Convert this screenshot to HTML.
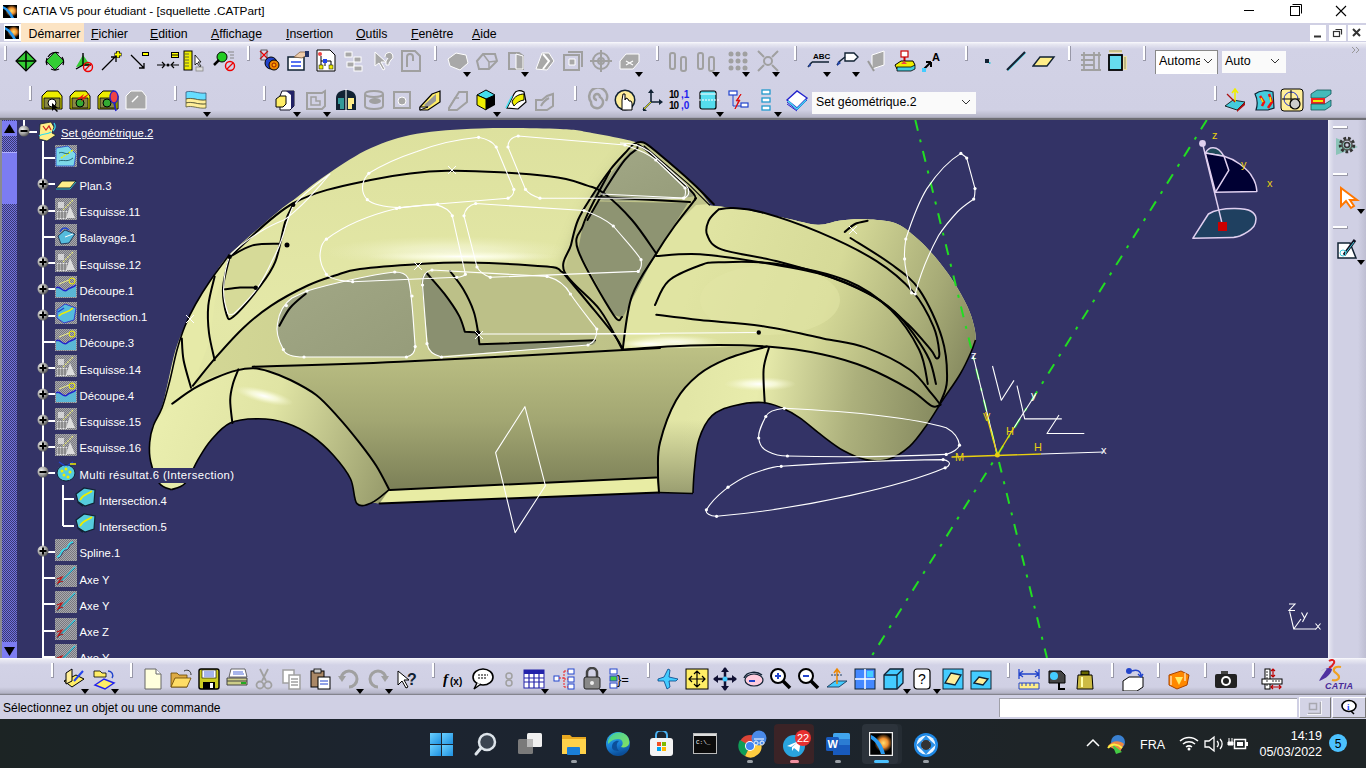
<!DOCTYPE html>
<html><head><meta charset="utf-8"><style>
*{margin:0;padding:0;box-sizing:border-box}
html,body{width:1366px;height:768px;overflow:hidden;background:#333366;font-family:"Liberation Sans",sans-serif;position:relative}
.abs{position:absolute}
.t{position:absolute;white-space:nowrap;line-height:1}
#title{left:0;top:0;width:1366px;height:23px;background:#fff}
#menu{left:0;top:23px;width:1366px;height:19px;background:#d0d0e4}
#tb{left:0;top:42px;width:1366px;height:76px;background:linear-gradient(#fafafd 0px,#e8e8f2 2px,#d2d2e6 7px,#d0d0e4 68px,#b4b4c6 75px,#9a9aa8 76px)}
#tbline{left:0;top:118px;width:1366px;height:2px;background:#6e6e74}
#vp{left:0;top:120px;width:1328px;height:538px;background:#333366;overflow:hidden}
#rtb{left:1328px;top:120px;width:38px;height:538px;background:linear-gradient(90deg,#f4f4fa 0,#e0e0ee 2px,#d0d0e4 6px,#d0d0e4 30px,#bebed2 38px)}
#btb{left:0;top:658px;width:1366px;height:37px;background:linear-gradient(#fafafd 0px,#e8e8f2 2px,#d2d2e6 7px,#d0d0e4 29px,#b4b4c6 35px,#9a9aa8 36px,#6e6e74 37px)}
#status{left:0;top:695px;width:1366px;height:24px;background:#d0d0e4}
#task{left:0;top:719px;width:1366px;height:49px;background:linear-gradient(90deg,#1c2424 0%,#1c2430 30%,#1c242e 55%,#1e2427 75%,#1e2426 100%)}
.hd{width:3px;background:#fff;border-right:1px solid #a0a0b0;border-bottom:1px solid #a0a0b0}
.menu-t{font-size:12.3px;color:#000;top:27.5px}
.tree-t{font-size:11.3px;color:#fff;background:#333366;padding:2px 1px 2px 0px}

.ic{position:absolute;width:24px;height:24px}
</style></head><body>
<div id="title" class="abs"></div>
<svg class="abs" style="left:3px;top:5px" width="14" height="13"><defs><radialGradient id="burst" cx="0.62" cy="0.45" r="0.45"><stop offset="0" stop-color="#ffe070"/><stop offset="0.5" stop-color="#f09030"/><stop offset="1" stop-color="#f09030" stop-opacity="0"/></radialGradient></defs><rect width="14" height="13" fill="#000"/><rect width="14" height="13" fill="url(#burst)"/><path d="M0,1 C5,3 9,8 11,13 L8,13 C6,9 3,5 0,3.5Z" fill="#2a9af0"/></svg>
<div class="t" style="left:23px;top:5.5px;font-size:11.8px;color:#000">CATIA V5 pour étudiant - [squellette .CATPart]</div>
<svg class="abs" style="left:1240px;top:0" width="126" height="23"><path d="M4,10.5H14" stroke="#000" stroke-width="1"/><rect x="50.5" y="6.5" width="9" height="9" fill="none" stroke="#000"/><path d="M52.5,4.5H61.5V13.5" fill="none" stroke="#000"/><path d="M96,6L106,16M106,6L96,16" stroke="#000" stroke-width="1.1"/></svg>
<div id="menu" class="abs"></div>
<div class="abs" style="left:21px;top:23px;width:63px;height:19px;background:#fce4c4"></div>
<div class="abs" style="left:4px;top:24px;width:17px;height:17px;background:#fff"></div>
<svg class="abs" style="left:5px;top:26px" width="14" height="13"><rect width="14" height="13" fill="#000"/><rect width="14" height="13" fill="url(#burst)"/><path d="M0,1 C5,3 9,8 11,13 L8,13 C6,9 3,5 0,3.5Z" fill="#2a9af0"/></svg>
<div class="t menu-t" style="left:28.5px">Démarrer</div>
<div class="t menu-t" style="left:91px"><u>F</u>ichier</div>
<div class="t menu-t" style="left:150px"><u>E</u>dition</div>
<div class="t menu-t" style="left:211px"><u>A</u>ffichage</div>
<div class="t menu-t" style="left:286px"><u>I</u>nsertion</div>
<div class="t menu-t" style="left:356px"><u>O</u>utils</div>
<div class="t menu-t" style="left:411px"><u>F</u>enêtre</div>
<div class="t menu-t" style="left:472px"><u>A</u>ide</div>
<div class="abs" style="left:1310px;top:25px;width:16px;height:16px;background:#fff"></div>
<div class="abs" style="left:1329px;top:25px;width:17px;height:16px;background:#fff"></div>
<div class="abs" style="left:1348px;top:25px;width:18px;height:16px;background:#fff"></div>
<svg class="abs" style="left:1310px;top:25px" width="56" height="16"><path d="M4,11.5H11" stroke="#333" stroke-width="2"/><rect x="23.5" y="6.5" width="6" height="5" fill="none" stroke="#333" stroke-width="1.2"/><path d="M25.5,4.5H31.5V9.5" fill="none" stroke="#333" stroke-width="1.2"/><path d="M43,4L50,11M50,4L43,11" stroke="#333" stroke-width="2"/></svg>
<div id="tb" class="abs"></div>
<div id="tbline" class="abs"></div>
<div class="abs" style="left:4px;top:46px;width:3px;height:15px;background:#fff;border-right:1px solid #9898a8;border-bottom:1px solid #9898a8"></div>
<div class="abs" style="left:247px;top:46px;width:3px;height:15px;background:#fff;border-right:1px solid #9898a8;border-bottom:1px solid #9898a8"></div>
<div class="abs" style="left:434px;top:46px;width:3px;height:15px;background:#fff;border-right:1px solid #9898a8;border-bottom:1px solid #9898a8"></div>
<div class="abs" style="left:656px;top:46px;width:3px;height:15px;background:#fff;border-right:1px solid #9898a8;border-bottom:1px solid #9898a8"></div>
<div class="abs" style="left:794px;top:46px;width:3px;height:15px;background:#fff;border-right:1px solid #9898a8;border-bottom:1px solid #9898a8"></div>
<div class="abs" style="left:965px;top:46px;width:3px;height:15px;background:#fff;border-right:1px solid #9898a8;border-bottom:1px solid #9898a8"></div>
<div class="abs" style="left:1068px;top:46px;width:3px;height:15px;background:#fff;border-right:1px solid #9898a8;border-bottom:1px solid #9898a8"></div>
<div class="abs" style="left:1143px;top:46px;width:3px;height:15px;background:#fff;border-right:1px solid #9898a8;border-bottom:1px solid #9898a8"></div>
<svg class="abs" style="left:14px;top:49px" width="24" height="24" viewBox="0 0 24 24"><path d="M12,2 L22,12 L12,22 L2,12Z" fill="#3c3" stroke="#000" stroke-width="1.2"/><path d="M12,3V21M3,12H21" stroke="#000" stroke-width="1.5"/></svg>
<svg class="abs" style="left:43px;top:49px" width="24" height="24" viewBox="0 0 24 24"><path d="M12,3 L21,12 L12,21 L3,12Z" fill="#3c3" stroke="#222" stroke-width="1"/><path d="M5,8 A9,9 0 0 1 16,4M19,8A9,9 0 0 1 20,16M16,20A9,9 0 0 1 8,20M4,16A9,9 0 0 1 4,9" stroke="#000" stroke-width="1.3" fill="none"/></svg>
<svg class="abs" style="left:72px;top:49px" width="24" height="24" viewBox="0 0 24 24"><path d="M4,18 L11,6 L18,16Z" fill="#3c3"/><path d="M11,4V16H19M11,16L4,20" stroke="#000" stroke-width="1.4" fill="none"/><circle cx="16" cy="18" r="4.5" fill="none" stroke="#e00" stroke-width="1.4"/><path d="M13,21L19,15" stroke="#e00" stroke-width="1.3"/></svg>
<svg class="abs" style="left:99px;top:49px" width="24" height="24" viewBox="0 0 24 24"><path d="M3,21 L17,7M12,8H17V13" stroke="#000" stroke-width="1.3" fill="none"/><path d="M19,2V9M15.5,5.5H22.5" stroke="#000" stroke-width="3.5"/><path d="M19,2.5V8.5M16,5.5H22" stroke="#ff0" stroke-width="1.8"/></svg>
<svg class="abs" style="left:127px;top:49px" width="24" height="24" viewBox="0 0 24 24"><path d="M4,6 L17,19M12,19H17V14" stroke="#000" stroke-width="1.3" fill="none"/><rect x="15" y="3" width="7" height="4" fill="#000"/><rect x="16" y="4" width="5" height="2" fill="#ff0"/></svg>
<svg class="abs" style="left:156px;top:49px" width="24" height="24" viewBox="0 0 24 24"><path d="M1,16H8M6,13L9,16L6,19M23,16H16M18,13L15,16L18,19" stroke="#000" stroke-width="1.2" fill="none"/><circle cx="12" cy="16" r="1.6" fill="#000"/><rect x="15" y="3" width="8" height="6" fill="#000"/><rect x="16" y="4" width="6" height="1.5" fill="#ff0"/><rect x="16" y="6.5" width="6" height="1.5" fill="#ff0"/></svg>
<svg class="abs" style="left:182px;top:49px" width="24" height="24" viewBox="0 0 24 24"><rect x="2" y="2" width="8" height="19" fill="#ee0" stroke="#000" stroke-width="1"/><path d="M3,5H7M3,8H7M3,11H7M3,14H7M3,17H7" stroke="#444" stroke-width="0.8"/><path d="M13,6 L13,16 L15,14 L18,18 L19,17 L16,13 L19,13Z" fill="#fff" stroke="#000" stroke-width="0.8"/><rect x="14" y="18" width="7" height="4" fill="#ddd" stroke="#888" stroke-width="0.8"/></svg>
<svg class="abs" style="left:213px;top:49px" width="24" height="24" viewBox="0 0 24 24"><circle cx="9" cy="8" r="5" fill="#2c2" stroke="#000" stroke-width="1"/><path d="M6,11L1,16" stroke="#000" stroke-width="2.5"/><path d="M15,3H21M17,6H21M17,9H21" stroke="#888" stroke-width="1"/><circle cx="17" cy="17" r="4.5" fill="none" stroke="#e00" stroke-width="1.4"/><path d="M14,20L20,14" stroke="#e00" stroke-width="1.3"/></svg>
<svg class="abs" style="left:258px;top:49px" width="24" height="24" viewBox="0 0 24 24"><path d="M2,2L10,10M10,2L2,10" stroke="#e00" stroke-width="1.2"/><rect x="3" y="1" width="6" height="10" fill="none" stroke="#444" stroke-width="0.8"/><circle cx="13" cy="14" r="6" fill="#24c" stroke="#000" stroke-width="1"/><circle cx="16" cy="16" r="5" fill="#e80" stroke="#000" stroke-width="1"/><circle cx="16" cy="16" r="2" fill="#fa0" stroke="#800" stroke-width="0.8"/></svg>
<svg class="abs" style="left:286px;top:49px" width="24" height="24" viewBox="0 0 24 24"><rect x="2" y="8" width="16" height="13" fill="#fff" stroke="#123" stroke-width="1.5"/><path d="M5,13H15M5,17H15" stroke="#24e" stroke-width="1.5"/><path d="M8,8 L14,3 L19,3 L21,6 L16,9Z" fill="#eca" stroke="#864" stroke-width="0.8"/><rect x="19" y="2" width="4" height="6" fill="#236"/></svg>
<svg class="abs" style="left:314px;top:49px" width="24" height="24" viewBox="0 0 24 24"><path d="M3,1H16L21,6V22H3Z" fill="#fff" stroke="#000" stroke-width="1"/><path d="M7,7V12H17V16M11,12V17M7,12V17" stroke="#000" stroke-width="1" fill="none"/><rect x="5" y="16" width="4" height="4" fill="#ee0" stroke="#000" stroke-width="0.5"/><rect x="15" y="16" width="4" height="4" fill="#ee0" stroke="#000" stroke-width="0.5"/><rect x="9" y="10" width="4" height="4" fill="#24e"/><circle cx="6" cy="5" r="2" fill="#e44"/></svg>
<svg class="abs" style="left:342px;top:49px" width="24" height="24" viewBox="0 0 24 24"><g fill="#a8a8a8" stroke="#fff" stroke-width="1"><rect x="3" y="3" width="7" height="5"/><rect x="12" y="8" width="7" height="5"/><rect x="5" y="13" width="7" height="5"/><rect x="12" y="17" width="8" height="5"/></g></svg>
<svg class="abs" style="left:371px;top:49px" width="24" height="24" viewBox="0 0 24 24"><g fill="#a8a8a8" stroke="#fff" stroke-width="1"><path d="M4,3L4,17L8,14L12,21L14,20L10,13L15,13Z"/><path d="M14,8A4,4 0 1 1 20,11L18,14V16H15V12L17,9" /></g></svg>
<svg class="abs" style="left:399px;top:49px" width="24" height="24" viewBox="0 0 24 24"><g fill="#a8a8a8" stroke="#fff" stroke-width="1"><path d="M3,2H16L21,7V22H3Z" fill="none" stroke="#a0a0a0" stroke-width="2"/><path d="M8,18V8A3,3 0 0 1 14,8V12" fill="none" stroke="#a0a0a0" stroke-width="2"/></g></svg>
<svg class="abs" style="left:446px;top:49px" width="24" height="24" viewBox="0 0 24 24"><g fill="#a8a8a8" stroke="#fff" stroke-width="1"><path d="M2,10L10,4L20,6L22,14L14,21L4,17Z"/></g></svg>
<svg class="abs" style="left:475px;top:49px" width="24" height="24" viewBox="0 0 24 24"><g fill="#a8a8a8" stroke="#fff" stroke-width="1"><path d="M2,12L8,5H20L22,12L14,20H4Z" fill="none" stroke="#a0a0a0" stroke-width="2"/><path d="M8,5L14,13L22,12M14,13L14,20" fill="none" stroke="#a0a0a0" stroke-width="1.5"/></g></svg>
<svg class="abs" style="left:504px;top:49px" width="24" height="24" viewBox="0 0 24 24"><g fill="#a8a8a8" stroke="#fff" stroke-width="1"><path d="M5,4H15L19,7V20H5Z" fill="none" stroke="#a0a0a0" stroke-width="2"/><path d="M12,5V20L19,20V7Z"/></g></svg>
<svg class="abs" style="left:533px;top:49px" width="24" height="24" viewBox="0 0 24 24"><g fill="#a8a8a8" stroke="#fff" stroke-width="1"><path d="M3,20L9,4L16,4L21,12L14,21Z"/><path d="M10,5L16,12L10,20" fill="none" stroke="#fff" stroke-width="2"/></g></svg>
<svg class="abs" style="left:561px;top:49px" width="24" height="24" viewBox="0 0 24 24"><g fill="#a8a8a8" stroke="#fff" stroke-width="1"><path d="M3,6H18V21H3Z" fill="none" stroke="#a0a0a0" stroke-width="2"/><path d="M7,3H21V18" fill="none" stroke="#a0a0a0" stroke-width="2"/><path d="M8,10H14V16H8Z"/></g></svg>
<svg class="abs" style="left:589px;top:49px" width="24" height="24" viewBox="0 0 24 24"><g fill="none" stroke="#a0a0a0" stroke-width="2"><circle cx="12" cy="12" r="8"/><circle cx="12" cy="12" r="3"/><path d="M12,1V23M1,12H23"/></g></svg>
<svg class="abs" style="left:618px;top:49px" width="24" height="24" viewBox="0 0 24 24"><g fill="#a8a8a8" stroke="#fff" stroke-width="1"><path d="M2,12L8,5H21V13L15,20H2Z"/><path d="M8,12L15,16M15,12L8,16" stroke="#fff" stroke-width="1.2"/></g></svg>
<svg class="abs" style="left:667px;top:49px" width="24" height="24" viewBox="0 0 24 24"><g fill="none" stroke="#a0a0a0" stroke-width="2"><rect x="3" y="4" width="5" height="16" rx="2"/><rect x="14" y="8" width="5" height="14" rx="2"/></g></svg>
<svg class="abs" style="left:695px;top:49px" width="24" height="24" viewBox="0 0 24 24"><g fill="none" stroke="#a0a0a0" stroke-width="2"><rect x="3" y="4" width="5" height="16" rx="2"/><rect x="14" y="8" width="5" height="14" rx="2"/></g></svg>
<svg class="abs" style="left:726px;top:49px" width="24" height="24" viewBox="0 0 24 24"><g fill="#a0a0a0"><circle cx="5" cy="5" r="2.5"/><circle cx="12" cy="5" r="2.5"/><circle cx="19" cy="5" r="2.5"/><circle cx="5" cy="12" r="2.5"/><circle cx="12" cy="12" r="2.5"/><circle cx="19" cy="12" r="2.5"/><circle cx="5" cy="19" r="2.5"/><circle cx="12" cy="19" r="2.5"/><circle cx="19" cy="19" r="2.5"/></g></svg>
<svg class="abs" style="left:756px;top:49px" width="24" height="24" viewBox="0 0 24 24"><g fill="none" stroke="#a0a0a0" stroke-width="2"><circle cx="12" cy="12" r="4"/><path d="M2,2L8,8M22,2L16,8M2,22L8,16M22,22L16,16"/></g></svg>
<svg class="abs" style="left:807px;top:49px" width="24" height="24" viewBox="0 0 24 24"><text x="6" y="10" font-size="8" font-family="Liberation Sans" fill="#000" font-weight="bold">ABC</text><path d="M5,13H22M5,13L1,18" stroke="#123" stroke-width="1.5" fill="none"/><path d="M1,18L3,14L4,17Z" fill="#24a"/></svg>
<svg class="abs" style="left:836px;top:49px" width="24" height="24" viewBox="0 0 24 24"><path d="M9,4H18L22,8L18,12H9Z" fill="#fff" stroke="#123" stroke-width="1.4"/><path d="M9,8L4,12L1,16" stroke="#123" stroke-width="1.5" fill="none"/><path d="M1,17L2,12L5,14Z" fill="#24a"/></svg>
<svg class="abs" style="left:864px;top:49px" width="24" height="24" viewBox="0 0 24 24"><g fill="#a8a8a8" stroke="#fff" stroke-width="1"><path d="M8,6L20,2V16L8,20Z"/><path d="M4,12L10,22" stroke="#999" stroke-width="2"/></g></svg>
<svg class="abs" style="left:893px;top:49px" width="24" height="24" viewBox="0 0 24 24"><rect x="8" y="2" width="7" height="6" fill="#fff" stroke="#c00" stroke-width="1.2"/><path d="M11.5,8V12" stroke="#c00" stroke-width="2"/><path d="M2,16L8,12H20L22,16L18,20H4Z" fill="#ee0" stroke="#000" stroke-width="1"/><path d="M4,18H18L22,16V20L18,22H4Z" fill="#4cd" stroke="#000" stroke-width="0.8"/><path d="M8,15L11,12L14,15" fill="#e44"/></svg>
<svg class="abs" style="left:921px;top:49px" width="24" height="24" viewBox="0 0 24 24"><path d="M2,21L10,13M10,13V18M10,13H5" stroke="#000" stroke-width="2" fill="none"/><rect x="1" y="19" width="4" height="4" fill="#4cf"/><text x="11" y="12" font-size="11" font-family="Liberation Sans" font-weight="bold" fill="#000">A</text></svg>
<svg class="abs" style="left:976px;top:49px" width="24" height="24" viewBox="0 0 24 24"><rect x="9" y="10" width="4" height="4" fill="#123"/><rect x="13" y="13" width="1.5" height="2" fill="#4cd"/></svg>
<svg class="abs" style="left:1004px;top:49px" width="24" height="24" viewBox="0 0 24 24"><path d="M3,21L21,3" stroke="#123" stroke-width="2.2"/><path d="M4,22L22,4" stroke="#4cd" stroke-width="0.8"/></svg>
<svg class="abs" style="left:1032px;top:49px" width="24" height="24" viewBox="0 0 24 24"><path d="M1,17L8,8H22L15,17Z" fill="#fe8" stroke="#123" stroke-width="1.4"/></svg>
<svg class="abs" style="left:1079px;top:49px" width="24" height="24" viewBox="0 0 24 24"><g fill="none" stroke="#a0a0a0" stroke-width="1.8"><path d="M2,6H22M2,11H15M2,16H15M2,21H22M5,3V21M15,3V21M20,3V21"/></g></svg>
<svg class="abs" style="left:1106px;top:49px" width="24" height="24" viewBox="0 0 24 24"><rect x="3" y="6" width="13" height="15" fill="#6de" stroke="#000" stroke-width="1.8"/><path d="M3,2H16M19,8V20" stroke="#123" stroke-width="1.2"/><rect x="3" y="1" width="13" height="3" fill="#fe8" opacity="0.6"/><rect x="17" y="7" width="4" height="14" fill="#fe8" opacity="0.6"/></svg>
<svg class="abs" style="left:463px;top:72px" width="8" height="5"><path d="M0,0H8L4,5Z" fill="#000"/></svg>
<svg class="abs" style="left:521px;top:72px" width="8" height="5"><path d="M0,0H8L4,5Z" fill="#000"/></svg>
<svg class="abs" style="left:635px;top:72px" width="8" height="5"><path d="M0,0H8L4,5Z" fill="#000"/></svg>
<svg class="abs" style="left:712px;top:72px" width="8" height="5"><path d="M0,0H8L4,5Z" fill="#000"/></svg>
<svg class="abs" style="left:742px;top:72px" width="8" height="5"><path d="M0,0H8L4,5Z" fill="#000"/></svg>
<svg class="abs" style="left:772px;top:72px" width="8" height="5"><path d="M0,0H8L4,5Z" fill="#000"/></svg>
<svg class="abs" style="left:823px;top:72px" width="8" height="5"><path d="M0,0H8L4,5Z" fill="#000"/></svg>
<svg class="abs" style="left:852px;top:72px" width="8" height="5"><path d="M0,0H8L4,5Z" fill="#000"/></svg>
<div class="abs" style="left:1155px;top:50px;width:63px;height:24px;background:#fff;border:1px solid #888;border-bottom:none"></div>
<div class="t" style="left:1159px;top:55px;font-size:12.5px;color:#000;width:43px;overflow:hidden">Automatique</div>
<div class="abs" style="left:1200px;top:51px;width:17px;height:22px;background:#fafafa"></div>
<svg class="abs" style="left:1203px;top:58px" width="10" height="7"><path d="M1,1L5,5L9,1" stroke="#333" fill="none"/></svg>
<div class="abs" style="left:1222px;top:51px;width:64px;height:22px;background:#fafafa"></div>
<div class="t" style="left:1225px;top:55px;font-size:12.5px;color:#000">Auto</div>
<svg class="abs" style="left:1270px;top:58px" width="10" height="7"><path d="M1,1L5,5L9,1" stroke="#333" fill="none"/></svg>
<svg class="abs" style="left:1351px;top:46px" width="10" height="8"><path d="M1,1L4,4L1,7M5,1L8,4L5,7" stroke="#999" fill="none"/></svg>
<div class="abs" style="left:29px;top:86px;width:3px;height:15px;background:#fff;border-right:1px solid #9898a8;border-bottom:1px solid #9898a8"></div>
<div class="abs" style="left:174px;top:86px;width:3px;height:15px;background:#fff;border-right:1px solid #9898a8;border-bottom:1px solid #9898a8"></div>
<div class="abs" style="left:263px;top:86px;width:3px;height:15px;background:#fff;border-right:1px solid #9898a8;border-bottom:1px solid #9898a8"></div>
<div class="abs" style="left:574px;top:86px;width:3px;height:15px;background:#fff;border-right:1px solid #9898a8;border-bottom:1px solid #9898a8"></div>
<div class="abs" style="left:1214px;top:86px;width:3px;height:15px;background:#fff;border-right:1px solid #9898a8;border-bottom:1px solid #9898a8"></div>
<svg class="abs" style="left:40px;top:88px" width="24" height="24" viewBox="0 0 24 24"><path d="M2,8L7,3H18L22,8V21H2Z" fill="#ee0" stroke="#000" stroke-width="1"/><path d="M4,10H20V20H4Z" fill="#884" stroke="#000" stroke-width="0.8"/><circle cx="12" cy="15" r="4" fill="#fff" stroke="#000" stroke-width="1"/><path d="M12,15L12,23L14,21L17,24L18,23L15,20L18,20Z" fill="#000"/></svg>
<svg class="abs" style="left:68px;top:88px" width="24" height="24" viewBox="0 0 24 24"><path d="M2,8L7,3H18L22,8V21H2Z" fill="#ee0" stroke="#000" stroke-width="1"/><path d="M4,10H20V20H4Z" fill="#884" stroke="#000" stroke-width="0.8"/><circle cx="12" cy="15" r="4" fill="#3a3" stroke="#000" stroke-width="1"/><path d="M8,12L16,6L14,10L22,5L13,14L15,10Z" fill="#e11"/></svg>
<svg class="abs" style="left:96px;top:88px" width="24" height="24" viewBox="0 0 24 24"><path d="M2,8L7,3H18L22,8V21H2Z" fill="#ee0" stroke="#000" stroke-width="1"/><path d="M4,10H20V20H4Z" fill="#884" stroke="#000" stroke-width="0.8"/><circle cx="11" cy="15" r="4" fill="#3a3" stroke="#000" stroke-width="1"/><ellipse cx="18" cy="9" rx="4" ry="6" fill="#e44" stroke="#22c" stroke-width="1.3"/><path d="M18,15L20,23" stroke="#22c" stroke-width="1.5"/></svg>
<svg class="abs" style="left:124px;top:88px" width="24" height="24" viewBox="0 0 24 24"><g fill="#a8a8a8" stroke="#fff" stroke-width="1"><path d="M2,8L7,3H18L22,8V21H2Z"/><path d="M8,14L14,8" stroke="#fff" stroke-width="1.5"/></g></svg>
<svg class="abs" style="left:184px;top:88px" width="24" height="24" viewBox="0 0 24 24"><path d="M2,4C8,2 14,6 22,5V12C14,13 8,9 2,11Z" fill="#6df" stroke="#357" stroke-width="0.8"/><path d="M2,11C8,9 14,13 22,12V16C14,17 8,13 2,15Z" fill="#fe9" stroke="#553" stroke-width="0.8"/><path d="M2,15C8,13 14,17 22,16V20C14,21 8,17 2,19Z" fill="#fe9" stroke="#553" stroke-width="0.8"/></svg>
<svg class="abs" style="left:274px;top:88px" width="24" height="24" viewBox="0 0 24 24"><path d="M8,3H20V18L16,22H6V8Z" fill="#fff" stroke="#112" stroke-width="1"/><path d="M12,3H20V18L17,21V7Z" fill="#226"/><path d="M2,11L6,8H12V16L9,19H2Z" fill="#fe6" stroke="#000" stroke-width="1"/></svg>
<svg class="abs" style="left:304px;top:88px" width="24" height="24" viewBox="0 0 24 24"><g fill="#a8a8a8" stroke="#fff" stroke-width="1"><path d="M3,5H18L21,3V18L18,21H3Z" fill="none" stroke="#a0a0a0" stroke-width="2"/><path d="M7,9H12V13H16V17H7Z" fill="none" stroke="#a0a0a0" stroke-width="1.5"/></g></svg>
<svg class="abs" style="left:334px;top:88px" width="24" height="24" viewBox="0 0 24 24"><path d="M2,10C2,4 8,2 12,2C16,2 22,4 22,10V22H2Z" fill="#123"/><path d="M4,10H10V21H6V16H4Z" fill="#399"/><path d="M14,10H20V16H18V21H14Z" fill="#fe8"/><path d="M12,1V23" stroke="#fff" stroke-width="1"/></svg>
<svg class="abs" style="left:362px;top:88px" width="24" height="24" viewBox="0 0 24 24"><g fill="none" stroke="#a0a0a0" stroke-width="2"><ellipse cx="12" cy="6" rx="9" ry="3"/><path d="M3,6V18A9,3 0 0 0 21,18V6"/></g><ellipse cx="13" cy="13" rx="6" ry="3" fill="#a0a0a0"/></svg>
<svg class="abs" style="left:390px;top:88px" width="24" height="24" viewBox="0 0 24 24"><g fill="#a8a8a8" stroke="#fff" stroke-width="1"><path d="M4,4H20V20H4Z" fill="none" stroke="#a0a0a0" stroke-width="2"/><circle cx="12" cy="13" r="4"/></g></svg>
<svg class="abs" style="left:418px;top:88px" width="24" height="24" viewBox="0 0 24 24"><path d="M2,19L14,6L22,3V14L10,22H2Z" fill="#fe6" stroke="#000" stroke-width="1.2"/><path d="M6,17L18,6V13L9,20Z" fill="#999"/><path d="M2,19H10L2,22Z" fill="#fff" stroke="#000" stroke-width="1"/></svg>
<svg class="abs" style="left:446px;top:88px" width="24" height="24" viewBox="0 0 24 24"><g fill="#a8a8a8" stroke="#fff" stroke-width="1"><path d="M3,20L13,4H21V14L11,22H3Z" fill="none" stroke="#a0a0a0" stroke-width="2"/><path d="M3,20L9,10H13" fill="none" stroke="#a0a0a0" stroke-width="1.5"/></g></svg>
<svg class="abs" style="left:474px;top:88px" width="24" height="24" viewBox="0 0 24 24"><path d="M3,7L12,2L21,7L12,11Z" fill="#4de" stroke="#000" stroke-width="1"/><path d="M3,7V17L12,22V11Z" fill="#ee0" stroke="#000" stroke-width="1"/><path d="M21,7V17L12,22V11Z" fill="#000"/></svg>
<svg class="abs" style="left:504px;top:88px" width="24" height="24" viewBox="0 0 24 24"><path d="M3,20L10,6C12,2 16,2 20,4L22,14L14,21Z" fill="#fff" stroke="#000" stroke-width="1.2"/><path d="M8,14C10,8 16,6 20,6V12C14,13 12,16 10,18Z" fill="#ee0" stroke="#000" stroke-width="1"/><path d="M2,20L8,8" stroke="#4de" stroke-width="1.5"/></svg>
<svg class="abs" style="left:533px;top:88px" width="24" height="24" viewBox="0 0 24 24"><g fill="#a8a8a8" stroke="#fff" stroke-width="1"><path d="M3,12H9L14,8L20,6V18L14,22H3Z" fill="none" stroke="#a0a0a0" stroke-width="2"/><path d="M8,18C10,14 12,12 16,10" stroke="#a0a0a0" stroke-width="2" fill="none"/></g></svg>
<svg class="abs" style="left:585px;top:88px" width="24" height="24" viewBox="0 0 24 24"><g fill="none" stroke="#a0a0a0" stroke-width="2.5"><path d="M12,12 A3,3 0 1 1 15,9 A6,6 0 1 1 6,14 A9,9 0 1 1 21,13"/></g></svg>
<svg class="abs" style="left:613px;top:88px" width="24" height="24" viewBox="0 0 24 24"><circle cx="12" cy="12" r="10.5" fill="#123" /><circle cx="12" cy="12" r="9" fill="#fe9"/><path d="M9,22V12L10,6L12,6L12,12L13,10L15,11L16,13L18,13L19,15V22Z" fill="#fff" stroke="#000" stroke-width="1"/></svg>
<svg class="abs" style="left:641px;top:88px" width="24" height="24" viewBox="0 0 24 24"><path d="M10,14V2M10,14L20,14M10,14L2,22" stroke="#123" stroke-width="1.6" fill="none"/><path d="M7,5L10,1L13,5Z M18,11L22,14L18,17Z M2,19L2,23L6,23Z" fill="#123"/><path d="M10,14L3,21" stroke="#dd0" stroke-width="1"/></svg>
<svg class="abs" style="left:669px;top:88px" width="24" height="24" viewBox="0 0 24 24"><text x="0" y="10" font-size="10" font-family="Liberation Sans" font-weight="bold" fill="#000" letter-spacing="-1">10</text><text x="12" y="10" font-size="10" font-family="Liberation Sans" font-weight="bold" fill="#22e">,1</text><text x="0" y="21" font-size="10" font-family="Liberation Sans" font-weight="bold" fill="#000" letter-spacing="-1">10</text><text x="12" y="21" font-size="10" font-family="Liberation Sans" font-weight="bold" fill="#22e">,0</text></svg>
<svg class="abs" style="left:697px;top:88px" width="24" height="24" viewBox="0 0 24 24"><rect x="3" y="3" width="16" height="18" rx="2" fill="#5de" stroke="#000" stroke-width="1.2"/><path d="M2,12H22" stroke="#fff" stroke-width="1.2" stroke-dasharray="2 1"/><path d="M3,6H19" stroke="#fff" stroke-width="1"/></svg>
<svg class="abs" style="left:726px;top:88px" width="24" height="24" viewBox="0 0 24 24"><rect x="3" y="3" width="8" height="4" fill="#fff" stroke="#24c" stroke-width="1.2"/><rect x="15" y="15" width="7" height="4" fill="#fff" stroke="#24c" stroke-width="1.2"/><path d="M7,7V18M7,18H15" stroke="#24c" stroke-width="1"/><path d="M9,21L14,12L11,13L15,6L10,13L13,12Z" fill="#d11" stroke="#d11" stroke-width="1"/></svg>
<svg class="abs" style="left:755px;top:88px" width="24" height="24" viewBox="0 0 24 24"><rect x="7" y="2" width="8" height="4" fill="#fff" stroke="#29c" stroke-width="1.3"/><rect x="7" y="10" width="8" height="4" fill="#fff" stroke="#29c" stroke-width="1.3"/><rect x="7" y="18" width="8" height="4" fill="#fff" stroke="#29c" stroke-width="1.3"/></svg>
<svg class="abs" style="left:785px;top:88px" width="24" height="24" viewBox="0 0 24 24"><path d="M2,12L12,3L22,10L12,20Z" fill="#fff" stroke="#22c" stroke-width="1.4"/><path d="M2,14L12,22L22,12M2,16L12,23" stroke="#22c" stroke-width="1" fill="none"/><path d="M3,13L12,21L21,12" stroke="#4de" stroke-width="1.5" fill="none"/></svg>
<svg class="abs" style="left:1223px;top:88px" width="24" height="24" viewBox="0 0 24 24"><path d="M2,18L10,12L22,14L14,22Z" fill="#4cd" stroke="#000" stroke-width="0.8"/><path d="M14,22L22,14V17L14,24Z" fill="#a11"/><path d="M12,14V2M9,5L12,1L15,5" stroke="#ee0" stroke-width="1.6" fill="none"/><path d="M12,14L4,6" stroke="#a11" stroke-width="1.3"/></svg>
<svg class="abs" style="left:1252px;top:88px" width="24" height="24" viewBox="0 0 24 24"><path d="M3,6C8,2 16,2 21,4L22,20L16,22L4,22C6,16 5,10 3,6Z" fill="#4cd" stroke="#123" stroke-width="1.2"/><path d="M8,8L12,14L10,18M17,6L20,14L16,20" stroke="#e11" stroke-width="2.5" fill="none"/><path d="M9,10L11,14M18,9L19,14" stroke="#ee0" stroke-width="1.5"/></svg>
<svg class="abs" style="left:1280px;top:88px" width="24" height="24" viewBox="0 0 24 24"><rect x="1" y="1" width="22" height="22" rx="3" fill="#fe9" stroke="#000" stroke-width="1"/><circle cx="11" cy="11" r="7" fill="none" stroke="#23c" stroke-width="1"/><path d="M11,2V20M2,11H20" stroke="#000" stroke-width="1"/><circle cx="15" cy="16" r="5" fill="#ccc" stroke="#000" stroke-width="1.2"/></svg>
<svg class="abs" style="left:1309px;top:88px" width="24" height="24" viewBox="0 0 24 24"><path d="M2,6L8,2H22V6L16,10H2Z" fill="#4bb" stroke="#155" stroke-width="0.8"/><path d="M2,10H16V16H2Z" fill="#e22"/><path d="M4,12H14V14H4Z" fill="#ee0"/><path d="M2,16L16,16L22,12V18L16,22H2Z" fill="#4bb" stroke="#155" stroke-width="0.8"/></svg>
<svg class="abs" style="left:203px;top:112px" width="8" height="5"><path d="M0,0H8L4,5Z" fill="#000"/></svg>
<svg class="abs" style="left:293px;top:112px" width="8" height="5"><path d="M0,0H8L4,5Z" fill="#000"/></svg>
<svg class="abs" style="left:323px;top:112px" width="8" height="5"><path d="M0,0H8L4,5Z" fill="#000"/></svg>
<svg class="abs" style="left:493px;top:112px" width="8" height="5"><path d="M0,0H8L4,5Z" fill="#000"/></svg>
<svg class="abs" style="left:716px;top:112px" width="8" height="5"><path d="M0,0H8L4,5Z" fill="#000"/></svg>
<svg class="abs" style="left:774px;top:112px" width="8" height="5"><path d="M0,0H8L4,5Z" fill="#000"/></svg>
<div class="abs" style="left:812px;top:92px;width:164px;height:22px;background:#fafafa"></div>
<div class="t" style="left:816px;top:96px;font-size:12.3px;color:#000">Set géométrique.2</div>
<svg class="abs" style="left:961px;top:99px" width="10" height="7"><path d="M1,1L5,5L9,1" stroke="#333" fill="none"/></svg>
<div id="vp" class="abs"><svg id="car" class="abs" style="left:0;top:0" width="1328" height="538" viewBox="0 120 1328 538">
<defs>
<linearGradient id="gBody" gradientUnits="userSpaceOnUse" x1="450" y1="350" x2="450" y2="492"><stop offset="0" stop-color="#bcc084"/><stop offset="0.5" stop-color="#a2a672"/><stop offset="1" stop-color="#7a7e56"/></linearGradient>
<linearGradient id="gRoof" x1="0" y1="0" x2="0" y2="1"><stop offset="0" stop-color="#dde19e"/><stop offset="0.5" stop-color="#e4e8a8"/><stop offset="1" stop-color="#dee2a0"/></linearGradient>
<linearGradient id="gFF" gradientUnits="userSpaceOnUse" x1="690" y1="380" x2="960" y2="420"><stop offset="0" stop-color="#e2e6a6"/><stop offset="0.25" stop-color="#e8ecac"/><stop offset="0.6" stop-color="#acb07c"/><stop offset="1" stop-color="#7c8058"/></linearGradient>
<linearGradient id="gHood" gradientUnits="userSpaceOnUse" x1="700" y1="260" x2="975" y2="360"><stop offset="0" stop-color="#e0e4a2"/><stop offset="0.45" stop-color="#d6da98"/><stop offset="0.8" stop-color="#a6aa76"/><stop offset="1" stop-color="#84885e"/></linearGradient>
<linearGradient id="gRF" gradientUnits="userSpaceOnUse" x1="160" y1="400" x2="390" y2="480"><stop offset="0" stop-color="#eaeeae"/><stop offset="0.45" stop-color="#e0e4a4"/><stop offset="1" stop-color="#989c6c"/></linearGradient>
<linearGradient id="gSide" gradientUnits="userSpaceOnUse" x1="190" y1="300" x2="620" y2="340"><stop offset="0" stop-color="#d4d896"/><stop offset="1" stop-color="#bec288"/></linearGradient>
<linearGradient id="gWin" x1="0" y1="0" x2="1" y2="1"><stop offset="0" stop-color="#a2a886"/><stop offset="1" stop-color="#969c7a"/></linearGradient>
<linearGradient id="gShade" gradientUnits="userSpaceOnUse" x1="530" y1="200" x2="590" y2="215"><stop offset="0" stop-color="#b0b480" stop-opacity="0"/><stop offset="1" stop-color="#b0b480" stop-opacity="0.9"/></linearGradient>
<radialGradient id="gHi" cx="0.5" cy="0.5" r="0.5"><stop offset="0" stop-color="#ffffff" stop-opacity="1"/><stop offset="0.45" stop-color="#fafce0" stop-opacity="0.8"/><stop offset="1" stop-color="#f0f2c8" stop-opacity="0"/></radialGradient>
</defs>
<path fill="url(#gRoof)" d="M171.2,489.7 C169.2,488.6 162.7,487.9 159.3,483.2 C155.9,478.5 152.3,468.5 150.7,461.7 C149.1,454.9 149.2,448.5 149.7,442.4 C150.2,436.3 151.4,430.9 153.5,425.2 C155.6,419.5 159.3,415.2 162.0,408.0 C164.7,400.8 167.0,391.7 169.5,382.0 C172.0,372.3 174.4,359.3 177.0,350.0 C179.6,340.7 181.9,333.6 185.0,326.0 C188.1,318.4 191.1,312.2 195.4,304.5 C199.7,296.8 205.0,288.3 210.7,280.0 C216.4,271.7 220.6,263.5 229.5,254.5 C238.4,245.5 252.9,235.4 264.0,226.0 C275.1,216.6 285.0,206.9 296.0,198.0 C307.0,189.1 317.5,180.8 330.0,172.5 C342.5,164.2 356.5,154.4 371.0,148.0 C385.5,141.6 398.6,137.1 416.8,133.8 C435.0,130.6 456.1,129.3 480.0,128.5 C503.9,127.7 541.3,128.3 560.0,129.0 C578.7,129.7 581.3,131.2 592.0,132.9 C602.7,134.6 615.8,137.2 624.4,139.3 C633.0,141.5 636.7,141.5 643.7,145.8 C650.7,150.1 658.8,158.7 666.3,165.1 C673.8,171.5 681.5,177.7 688.8,184.4 C696.0,191.1 706.3,201.9 709.8,205.4 L709.8,205.4 C714.4,205.9 724.6,206.5 737.2,208.6 C749.8,210.7 772.1,215.5 785.5,218.2 C798.9,220.9 808.6,224.3 817.7,224.7 C826.8,225.1 832.2,221.4 840.2,220.5 C848.2,219.6 856.9,218.8 866.0,219.2 C875.1,219.6 887.0,220.2 895.0,223.0 C903.0,225.8 907.8,230.6 914.3,236.0 C920.8,241.4 927.2,247.8 933.7,255.3 C940.2,262.8 947.4,272.4 953.0,281.0 C958.6,289.6 964.0,299.3 967.5,306.8 C971.0,314.3 972.7,320.5 974.0,326.0 C975.3,331.5 976.0,335.7 975.5,340.0 C975.0,344.3 973.6,346.3 971.1,352.0 C968.6,357.7 965.0,365.9 960.2,374.0 C955.5,382.1 948.1,391.9 942.6,400.3 C937.1,408.7 932.7,416.7 927.2,424.4 C921.7,432.1 916.2,440.5 909.6,446.4 C903.0,452.3 895.0,457.4 887.7,459.6 C880.4,461.8 873.0,461.1 865.7,459.6 C858.4,458.1 851.0,454.8 843.7,450.8 C836.4,446.8 829.1,440.9 821.8,435.4 C814.5,429.9 806.4,422.5 799.8,417.9 C793.2,413.3 788.2,410.6 782.0,408.0 C775.8,405.4 770.5,402.9 762.5,402.5 C754.5,402.1 742.4,403.6 734.0,405.8 C725.6,408.0 717.9,410.0 712.0,415.7 C706.1,421.4 701.7,430.8 698.8,439.8 C695.9,448.9 695.4,461.1 694.4,470.0 C693.4,478.9 693.2,489.2 693.0,493.0 L659.0,492.5 L379.5,503.5 L372.0,502.6 C369.5,502.8 360.6,507.5 357.0,503.6 C353.4,499.7 354.5,487.1 350.6,479.0 C346.7,470.9 339.8,462.5 333.4,455.3 C326.9,448.1 319.8,441.4 311.9,436.0 C304.0,430.6 294.9,425.9 286.0,423.0 C277.1,420.1 267.5,418.8 258.2,418.8 C248.9,418.8 238.1,419.4 230.2,423.0 C222.3,426.6 216.4,434.1 211.0,440.2 C205.6,446.3 202.3,452.4 198.0,459.6 C193.7,466.8 189.6,478.2 185.1,483.2 C180.6,488.2 173.5,488.6 171.2,489.7Z"/>
<path fill="#e6eaa8" d="M152.9,425.2 C154.3,422.3 159.0,415.2 161.5,408.0 C164.0,400.8 165.7,391.7 168.0,382.0 C170.3,372.3 172.7,359.3 175.5,350.0 C178.3,340.7 181.7,333.6 185.0,326.0 C188.3,318.4 191.1,312.2 195.4,304.5 C199.7,296.8 205.1,288.2 210.7,280.0 C216.3,271.8 220.5,264.6 229.2,255.3 C237.9,246.1 252.2,233.7 263.0,224.5 C273.8,215.3 284.0,205.8 293.7,200.0 C303.4,194.2 316.4,191.7 321.0,190.0 L293.0,204.7 L229.7,256.8 L215.0,300.0 L210.0,340.0 L191.6,388.7 L172.2,403.7Z"/>
<ellipse cx="450" cy="252" rx="125" ry="16" fill="url(#gHi)" opacity="0.55"/>
<ellipse cx="462" cy="256.5" rx="95" ry="6" fill="url(#gHi)"/>
<ellipse cx="462" cy="256.5" rx="70" ry="3.5" fill="url(#gHi)"/>
<path fill="url(#gSide)" d="M192.8,385.8 C196.8,380.9 208.0,366.4 216.5,356.7 C225.0,347.0 234.7,336.0 243.8,327.5 C252.9,319.0 260.6,312.6 271.2,305.6 C281.8,298.6 297.1,290.5 307.7,285.5 C318.3,280.5 326.3,278.2 335.0,275.5 C343.7,272.8 345.8,270.9 360.0,269.0 C374.2,267.1 402.3,265.1 420.0,264.0 C437.7,262.9 444.8,262.1 466.0,262.5 C487.2,262.9 530.6,264.6 547.0,266.6 C563.4,268.6 551.6,260.8 564.3,274.6 C577.0,288.4 613.2,337.1 623.0,349.6 L400.0,361.8 L252.7,366.7 L215.0,375.8Z"/>
<path fill="url(#gBody)" d="M252.7,366.7 L400.0,361.8 L660.0,348.0 L766.9,346.5 L766.9,346.5 C760.3,348.5 738.9,354.0 727.5,358.7 C716.1,363.4 707.1,367.8 698.5,374.8 C689.9,381.8 682.4,389.2 676.0,400.5 C669.6,411.8 663.0,430.6 660.0,442.4 C657.0,454.2 658.2,463.0 658.0,471.4 C657.8,479.8 658.8,489.0 659.0,492.5 L656.3,477.5 L390.0,490.0 L376.4,466.0 C373.5,462.1 365.6,450.6 359.2,442.4 C352.8,434.2 344.9,424.5 337.7,416.6 C330.5,408.7 324.1,401.1 316.2,395.0 C308.3,388.9 294.7,382.5 290.4,380.0Z"/>
<path fill="#e8eca4" d="M390,490 L656.3,477.5 L659,492.5 L379.5,503.5 Z"/>
<path fill="url(#gRF)" d="M152.9,425.2 C156.1,421.6 165.4,409.8 172.2,403.7 C179.0,397.6 186.5,393.0 193.7,388.7 C200.9,384.4 208.0,381.1 215.2,378.0 C222.4,374.9 230.2,372.0 236.7,370.4 C243.1,368.8 248.5,368.1 253.9,368.3 C259.3,368.5 262.9,369.6 269.0,371.5 C275.1,373.4 282.5,376.1 290.4,380.0 C298.3,383.9 308.3,388.9 316.2,395.0 C324.1,401.1 330.5,408.7 337.7,416.6 C344.9,424.5 352.8,434.2 359.2,442.4 C365.6,450.6 371.4,458.1 376.4,466.0 C381.4,473.9 387.1,485.8 389.2,489.7 L379.5,503.5 L372.0,502.6 C369.5,502.8 360.6,507.5 357.0,503.6 C353.4,499.7 354.5,487.1 350.6,479.0 C346.7,470.9 339.8,462.5 333.4,455.3 C326.9,448.1 319.8,441.4 311.9,436.0 C304.0,430.6 294.9,425.9 286.0,423.0 C277.1,420.1 267.5,418.8 258.2,418.8 C248.9,418.8 238.1,419.4 230.2,423.0 C222.3,426.6 216.4,434.1 211.0,440.2 C205.6,446.3 202.3,452.4 198.0,459.6 C193.7,466.8 189.6,478.2 185.1,483.2 C180.6,488.2 173.5,488.6 171.2,489.7 L159.3,483.2 C157.9,479.6 152.3,468.5 150.7,461.7 C149.1,454.9 149.3,448.5 149.7,442.4 C150.1,436.3 152.4,428.1 152.9,425.2Z"/>
<ellipse cx="264" cy="396" rx="30" ry="7" fill="url(#gHi)" transform="rotate(14 264 396)"/>
<path fill="url(#gHood)" d="M696.0,205.4 L709.8,205.4 C714.4,205.9 724.6,206.5 737.2,208.6 C749.8,210.7 772.1,215.5 785.5,218.2 C798.9,220.9 808.6,224.3 817.7,224.7 C826.8,225.1 832.2,221.4 840.2,220.5 C848.2,219.6 856.9,218.8 866.0,219.2 C875.1,219.6 887.0,220.2 895.0,223.0 C903.0,225.8 907.8,230.6 914.3,236.0 C920.8,241.4 927.2,247.8 933.7,255.3 C940.2,262.8 947.4,272.4 953.0,281.0 C958.6,289.6 964.0,299.3 967.5,306.8 C971.0,314.3 972.7,320.5 974.0,326.0 C975.3,331.5 976.0,335.7 975.5,340.0 C975.0,344.3 971.8,350.0 971.1,352.0 L960.2,374.0 L942.6,400.3 L942.6,400.3 C940.8,401.2 937.1,407.6 931.6,405.8 C926.1,404.0 920.6,395.7 909.6,389.3 C898.6,382.9 880.3,373.2 865.7,367.3 C851.1,361.4 838.3,357.7 821.8,354.2 C805.3,350.7 776.0,347.8 766.9,346.5 L660.0,348.0 L623.0,349.6 L631.8,296.4 L656.3,253.5 L674.6,226.0Z"/>
<ellipse cx="770" cy="300" rx="70" ry="35" fill="#e2e6a6" opacity="0.55"/>
<path fill="url(#gFF)" d="M659.0,492.5 C658.8,489.0 657.8,479.8 658.0,471.4 C658.2,463.0 657.0,454.2 660.0,442.4 C663.0,430.6 669.6,411.8 676.0,400.5 C682.4,389.2 689.9,381.8 698.5,374.8 C707.1,367.8 716.1,363.4 727.5,358.7 C738.9,354.0 760.3,348.5 766.9,346.5 L766.9,346.5 C776.0,347.8 805.3,350.7 821.8,354.2 C838.3,357.7 851.1,361.4 865.7,367.3 C880.3,373.2 898.6,382.9 909.6,389.3 C920.6,395.7 926.1,404.0 931.6,405.8 C937.1,407.6 940.8,401.2 942.6,400.3 L942.6,400.3 C940.0,404.3 932.7,416.7 927.2,424.4 C921.7,432.1 916.2,440.5 909.6,446.4 C903.0,452.3 895.0,457.4 887.7,459.6 C880.4,461.8 873.0,461.1 865.7,459.6 C858.4,458.1 851.0,454.8 843.7,450.8 C836.4,446.8 829.1,440.9 821.8,435.4 C814.5,429.9 806.4,422.5 799.8,417.9 C793.2,413.3 788.2,410.6 782.0,408.0 C775.8,405.4 770.5,402.9 762.5,402.5 C754.5,402.1 742.4,403.6 734.0,405.8 C725.6,408.0 717.9,410.0 712.0,415.7 C706.1,421.4 701.7,430.8 698.8,439.8 C695.9,448.9 695.4,461.1 694.4,470.0 C693.4,478.9 693.2,489.2 693.0,493.0Z"/>
<clipPath id="clipFF"><path d="M659.0,492.5 C658.8,489.0 657.8,479.8 658.0,471.4 C658.2,463.0 657.0,454.2 660.0,442.4 C663.0,430.6 669.6,411.8 676.0,400.5 C682.4,389.2 689.9,381.8 698.5,374.8 C707.1,367.8 716.1,363.4 727.5,358.7 C738.9,354.0 760.3,348.5 766.9,346.5 L766.9,346.5 C776.0,347.8 805.3,350.7 821.8,354.2 C838.3,357.7 851.1,361.4 865.7,367.3 C880.3,373.2 898.6,382.9 909.6,389.3 C920.6,395.7 926.1,404.0 931.6,405.8 C937.1,407.6 940.8,401.2 942.6,400.3 L942.6,400.3 C940.0,404.3 932.7,416.7 927.2,424.4 C921.7,432.1 916.2,440.5 909.6,446.4 C903.0,452.3 895.0,457.4 887.7,459.6 C880.4,461.8 873.0,461.1 865.7,459.6 C858.4,458.1 851.0,454.8 843.7,450.8 C836.4,446.8 829.1,440.9 821.8,435.4 C814.5,429.9 806.4,422.5 799.8,417.9 C793.2,413.3 788.2,410.6 782.0,408.0 C775.8,405.4 770.5,402.9 762.5,402.5 C754.5,402.1 742.4,403.6 734.0,405.8 C725.6,408.0 717.9,410.0 712.0,415.7 C706.1,421.4 701.7,430.8 698.8,439.8 C695.9,448.9 695.4,461.1 694.4,470.0 C693.4,478.9 693.2,489.2 693.0,493.0Z"/></clipPath>
<linearGradient id="gFFdark" gradientUnits="userSpaceOnUse" x1="0" y1="420" x2="0" y2="494"><stop offset="0" stop-color="#8c9066" stop-opacity="0"/><stop offset="1" stop-color="#8c9066" stop-opacity="0.85"/></linearGradient>
<rect clip-path="url(#clipFF)" x="650" y="420" width="60" height="80" fill="url(#gFFdark)"/>
<ellipse cx="760" cy="384" rx="36" ry="7" fill="url(#gHi)"/>
<ellipse cx="672" cy="342" rx="50" ry="7" fill="url(#gHi)" opacity="0.9"/>
<ellipse cx="650" cy="344" rx="32" ry="5" fill="url(#gHi)"/>
<clipPath id="clipSil"><path d="M171.2,489.7 C169.2,488.6 162.7,487.9 159.3,483.2 C155.9,478.5 152.3,468.5 150.7,461.7 C149.1,454.9 149.2,448.5 149.7,442.4 C150.2,436.3 151.4,430.9 153.5,425.2 C155.6,419.5 159.3,415.2 162.0,408.0 C164.7,400.8 167.0,391.7 169.5,382.0 C172.0,372.3 174.4,359.3 177.0,350.0 C179.6,340.7 181.9,333.6 185.0,326.0 C188.1,318.4 191.1,312.2 195.4,304.5 C199.7,296.8 205.0,288.3 210.7,280.0 C216.4,271.7 220.6,263.5 229.5,254.5 C238.4,245.5 252.9,235.4 264.0,226.0 C275.1,216.6 285.0,206.9 296.0,198.0 C307.0,189.1 317.5,180.8 330.0,172.5 C342.5,164.2 356.5,154.4 371.0,148.0 C385.5,141.6 398.6,137.1 416.8,133.8 C435.0,130.6 456.1,129.3 480.0,128.5 C503.9,127.7 541.3,128.3 560.0,129.0 C578.7,129.7 581.3,131.2 592.0,132.9 C602.7,134.6 615.8,137.2 624.4,139.3 C633.0,141.5 636.7,141.5 643.7,145.8 C650.7,150.1 658.8,158.7 666.3,165.1 C673.8,171.5 681.5,177.7 688.8,184.4 C696.0,191.1 706.3,201.9 709.8,205.4 L709.8,205.4 C714.4,205.9 724.6,206.5 737.2,208.6 C749.8,210.7 772.1,215.5 785.5,218.2 C798.9,220.9 808.6,224.3 817.7,224.7 C826.8,225.1 832.2,221.4 840.2,220.5 C848.2,219.6 856.9,218.8 866.0,219.2 C875.1,219.6 887.0,220.2 895.0,223.0 C903.0,225.8 907.8,230.6 914.3,236.0 C920.8,241.4 927.2,247.8 933.7,255.3 C940.2,262.8 947.4,272.4 953.0,281.0 C958.6,289.6 964.0,299.3 967.5,306.8 C971.0,314.3 972.7,320.5 974.0,326.0 C975.3,331.5 976.0,335.7 975.5,340.0 C975.0,344.3 973.6,346.3 971.1,352.0 C968.6,357.7 965.0,365.9 960.2,374.0 C955.5,382.1 948.1,391.9 942.6,400.3 C937.1,408.7 932.7,416.7 927.2,424.4 C921.7,432.1 916.2,440.5 909.6,446.4 C903.0,452.3 895.0,457.4 887.7,459.6 C880.4,461.8 873.0,461.1 865.7,459.6 C858.4,458.1 851.0,454.8 843.7,450.8 C836.4,446.8 829.1,440.9 821.8,435.4 C814.5,429.9 806.4,422.5 799.8,417.9 C793.2,413.3 788.2,410.6 782.0,408.0 C775.8,405.4 770.5,402.9 762.5,402.5 C754.5,402.1 742.4,403.6 734.0,405.8 C725.6,408.0 717.9,410.0 712.0,415.7 C706.1,421.4 701.7,430.8 698.8,439.8 C695.9,448.9 695.4,461.1 694.4,470.0 C693.4,478.9 693.2,489.2 693.0,493.0 L659.0,492.5 L379.5,503.5 L372.0,502.6 C369.5,502.8 360.6,507.5 357.0,503.6 C353.4,499.7 354.5,487.1 350.6,479.0 C346.7,470.9 339.8,462.5 333.4,455.3 C326.9,448.1 319.8,441.4 311.9,436.0 C304.0,430.6 294.9,425.9 286.0,423.0 C277.1,420.1 267.5,418.8 258.2,418.8 C248.9,418.8 238.1,419.4 230.2,423.0 C222.3,426.6 216.4,434.1 211.0,440.2 C205.6,446.3 202.3,452.4 198.0,459.6 C193.7,466.8 189.6,478.2 185.1,483.2 C180.6,488.2 173.5,488.6 171.2,489.7Z"/></clipPath><filter id="blur6" x="-50%" y="-50%" width="200%" height="200%"><feGaussianBlur stdDeviation="7"/></filter>
<g clip-path="url(#clipSil)"><path fill="#a8ac7a" opacity="0.75" filter="url(#blur6)" d="M555,290 L570,250 L585,215 L605,182 L625,158 L640,140 L600,205 L580,250 L575,290 Z"/></g>
<path fill="#c0c48a" d="M564.5,271.9 C565.6,267.4 568.8,253.7 571.0,245.0 C573.2,236.3 574.5,228.2 578.0,220.0 C581.5,211.8 586.7,204.3 592.0,196.0 C597.3,187.7 604.5,177.2 610.0,170.0 C615.5,162.8 621.0,157.3 625.0,153.0 C629.0,148.7 630.9,145.8 634.0,144.0 C637.1,142.2 639.7,141.0 643.6,142.5 C647.5,144.0 649.4,146.0 657.6,152.8 C665.8,159.6 684.0,174.7 692.7,183.2 C701.4,191.7 707.1,200.5 710.0,204.0 L696,205 L674.6,226 L656.3,253.5 L631.8,296.4 L622.6,350 Z"/>
<path fill="url(#gWin)" d="M634.0,150.4 C639.1,150.8 646.7,153.5 655.3,159.8 C663.9,166.1 680.2,181.8 685.7,188.0 C691.2,194.2 702.8,195.4 688.0,197.3 C673.2,199.2 609.6,203.5 596.7,199.6 C583.8,195.7 606.1,180.9 610.8,173.9 C615.5,166.9 620.9,161.4 624.8,157.5 C628.7,153.6 628.9,150.0 634.0,150.4Z"/>
<path fill="#8e9472" d="M598,201.5 L688,203 L656,253.5 L622.6,317.8 L613.4,314.7 L578,250 L582.8,226 Z"/>
<path fill="url(#gWin)" d="M306.9,291 C330,284 370,275 394.7,272 C402,272 406,274 408,278 C412,290 413,320 415.2,346.6 C415,352 412,356 406.4,357 L304,357 C292,357 285,354 283.4,349.6 C278,340 276,330 277.6,323.2 C279,312 285,303 292,298 Z"/>
<path fill="#8a9070" d="M421.6,285 C421,277 424,273 428,272 C438,285 450,300 459,315.6 C462,322 464,328 464.8,331.7 L479.4,332.5 L479.4,344.2 L595,340.2 C597,342 594,345 590.7,345 L440,356 C433,355 429,350 428.2,345 Z"/>
<path fill="#bcc088" d="M428,272 L547,276.4 C560,280 566,286 570.4,294 C580,308 590,320 598,339 L479.4,344.2 L479.4,332.5 L464.8,331.7 C462,322 459,315 459,315.6 C450,300 438,285 428,272 Z"/>
<path fill="#d6da98" d="M229.7,256.8 C240,248 262,242 278.5,243.7 L290,212 C286,230 282,250 275.3,261.7 C268,278 250,300 233,317 C226,314 223,300 223,287.7 C223,275 225,265 229.7,256.8 Z"/>
<g fill="none" stroke="#000" stroke-width="2" stroke-linejoin="round" stroke-linecap="round">
<path d="M229.7,256.8 C240.4,247.8 270.2,215.8 293.7,203.0 C317.2,190.2 345.0,185.4 370.6,180.0 C396.2,174.6 417.8,171.3 447.5,170.7 C477.2,170.1 525.7,173.7 549.0,176.2 C572.3,178.7 578.3,182.8 587.4,185.6 C596.5,188.4 596.3,187.3 603.7,193.0 C611.1,198.7 623.2,209.9 632.0,220.0 C640.8,230.1 652.2,247.9 656.3,253.5"/>
<path d="M192.8,385.8 C196.8,380.9 208.0,366.4 216.5,356.7 C225.0,347.0 234.7,336.0 243.8,327.5 C252.9,319.0 260.6,312.6 271.2,305.6 C281.8,298.6 297.1,290.5 307.7,285.5 C318.3,280.5 326.3,278.2 335.0,275.5 C343.7,272.8 345.8,270.9 360.0,269.0 C374.2,267.1 402.3,265.1 420.0,264.0 C437.7,262.9 444.8,262.1 466.0,262.5 C487.2,262.9 531.1,265.1 547.0,266.6 C562.9,268.1 558.3,270.1 561.4,271.7 C564.5,273.3 561.0,270.4 565.8,276.0 C570.6,281.6 581.8,295.0 590.0,305.0 C598.2,315.0 609.5,328.6 615.0,336.0 C620.5,343.4 621.7,347.3 623.0,349.6"/>
<path d="M252.7,366.7 C277.2,365.9 332.1,364.9 400.0,361.8 C467.9,358.7 616.7,350.3 660.0,348.0"/>
<path d="M172.2,403.7 C175.8,401.2 186.5,393.0 193.7,388.7 C200.9,384.4 208.0,381.1 215.2,378.0 C222.4,374.9 230.2,372.0 236.7,370.4 C243.1,368.8 248.5,368.1 253.9,368.3 C259.3,368.5 262.9,369.6 269.0,371.5 C275.1,373.4 282.5,376.1 290.4,380.0 C298.3,383.9 308.3,388.9 316.2,395.0 C324.1,401.1 330.5,408.7 337.7,416.6 C344.9,424.5 352.8,434.2 359.2,442.4 C365.6,450.6 371.4,458.1 376.4,466.0 C381.4,473.9 387.1,485.8 389.2,489.7"/>
<path d="M238.4,369.4 C237.5,371.8 234.3,378.9 232.9,384.0 C231.5,389.1 230.3,393.5 230.2,400.0 C230.1,406.5 232.0,419.2 232.4,423.0"/>
<path d="M390,490 L656.3,477.5"/>
<path d="M379.5,503.5 L659,492.5"/>
<path d="M181.8,338.4 C182.1,342.0 182.1,352.1 183.6,360.3 C185.1,368.5 189.8,383.1 191.0,387.7"/>
<path d="M214.7,276.4 C213.6,281.3 209.2,296.2 208.3,305.6 C207.4,315.0 207.9,323.9 209.0,333.0 C210.1,342.1 213.8,355.8 214.7,360.3"/>
<path d="M229.7,256.8 C228.6,261.9 223.6,278.2 223.0,287.7 C222.4,297.2 224.7,308.9 226.4,313.8 C228.1,318.7 227.6,321.4 233.0,317.0 C238.4,312.6 251.9,296.9 259.0,287.7 C266.1,278.5 271.0,272.6 275.3,261.7 C279.6,250.8 282.0,232.1 285.0,222.6 C288.0,213.1 291.8,207.7 293.2,204.7"/>
<path d="M229.7,256.8 C233.5,254.9 244.4,247.6 252.5,245.4 C260.6,243.2 274.2,244.0 278.5,243.7"/>
<path d="M224.8,289.3 C227.3,289.0 234.8,287.8 240.0,287.5 C245.2,287.2 253.1,287.7 255.7,287.7"/>
<path d="M622.6,350.0 C618.8,343.3 609.7,323.0 600.0,310.0 C590.3,297.0 569.3,282.7 564.5,271.9 C559.7,261.1 568.8,253.7 571.0,245.0 C573.2,236.3 574.5,228.2 578.0,220.0 C581.5,211.8 586.7,204.3 592.0,196.0 C597.3,187.7 604.5,177.2 610.0,170.0 C615.5,162.8 621.0,157.3 625.0,153.0 C629.0,148.7 630.9,145.8 634.0,144.0 C637.1,142.2 639.7,141.0 643.6,142.5 C647.5,144.0 649.4,146.0 657.6,152.8 C665.8,159.6 683.3,174.6 692.7,183.2 C702.1,191.8 710.3,200.8 713.8,204.3"/>
<path d="M587.4,220.0 C590.5,214.7 599.8,198.0 606.0,188.0 C612.2,178.0 619.7,166.2 624.8,159.8 C629.9,153.4 633.4,151.3 636.5,149.3 C639.6,147.3 634.6,141.2 643.6,148.0 C652.6,154.8 681.8,181.7 690.4,190.3 C699.0,198.9 694.2,198.1 695.0,199.6"/>
<path d="M696.0,198.4 C692.4,203.0 681.2,216.8 674.6,226.0 C668.0,235.2 663.4,241.8 656.3,253.5 C649.2,265.2 637.4,280.3 631.8,296.4 C626.2,312.5 624.1,341.1 622.6,350.0"/>
<path d="M598,197 L690,202"/>
<path d="M610.0,171.0 C607.0,176.7 596.5,195.8 592.0,205.0 C587.5,214.2 585.1,218.5 582.8,226.0 C580.5,233.5 572.9,235.2 578.0,250.0 C583.1,264.8 606.1,303.5 613.4,314.7 C620.7,325.9 620.6,316.6 622.0,317.0"/>
<path d="M426.7,273.2 C429.6,276.6 438.9,286.6 444.3,293.7 C449.7,300.8 455.6,309.3 459.0,315.6 C462.4,321.9 463.8,329.0 464.8,331.7 L479,332.5"/>
<path d="M450.0,271.0 C452.2,274.1 459.4,282.6 463.3,289.3 C467.2,296.0 471.2,304.1 473.6,311.2 C476.1,318.3 477.3,328.3 478.0,331.7 L479.4,344.2 L595,340.2"/>
<path d="M305.8,293.7 C303.2,296.1 294.4,302.7 290.0,308.0 C285.6,313.3 281.2,322.8 279.4,325.7"/>
<path d="M656.0,256.0 C663.3,255.7 682.4,253.2 700.0,254.3 C717.6,255.4 741.0,259.1 761.5,262.5 C782.0,265.9 805.9,270.0 823.0,274.8 C840.1,279.6 852.0,285.1 864.0,291.2 C876.0,297.3 886.2,304.2 894.7,311.7 C903.2,319.2 909.4,328.2 915.2,336.3 C921.0,344.4 926.0,352.1 929.5,360.0 C933.0,367.9 934.9,380.0 936.0,384.0"/>
<path d="M718.7,209.3 C717.0,211.2 710.5,216.5 708.6,220.8 C706.7,225.1 705.1,230.2 707.2,235.0 C709.4,239.8 710.0,245.1 721.5,249.4 C733.0,253.7 757.4,256.2 776.0,261.0 C794.6,265.8 816.3,271.8 833.0,278.0 C849.7,284.2 863.5,290.3 876.0,298.0 C888.5,305.7 898.7,315.4 907.8,324.0 C916.9,332.6 925.9,344.0 930.7,349.7 C935.5,355.4 935.0,357.8 936.4,358.3 C937.8,358.8 939.8,357.9 939.3,352.6 C938.8,347.4 937.9,336.8 933.6,326.8 C929.3,316.8 923.1,303.4 913.5,292.4 C903.9,281.4 892.0,270.9 876.2,260.9 C860.5,250.9 838.1,240.3 819.0,232.2 C799.9,224.1 775.9,216.2 761.6,212.2 C747.3,208.2 740.1,208.5 733.0,208.0 C725.9,207.5 721.1,209.1 718.7,209.3"/>
<path d="M655.0,305.0 C657.2,301.0 661.2,287.5 668.5,281.0 C675.8,274.5 690.6,268.9 699.0,265.8 C707.4,262.7 705.9,262.6 718.7,262.3 C731.5,262.0 754.5,260.7 776.0,263.8 C797.5,266.9 828.5,273.4 847.6,281.0 C866.7,288.6 878.7,298.2 890.6,309.6 C902.5,321.1 913.0,337.3 919.2,349.7 C925.4,362.1 926.4,378.3 927.8,384.0"/>
<path d="M656.3,314.7 C663.6,315.6 682.5,318.1 700.0,320.0 C717.5,321.9 741.0,322.9 761.5,326.0 C782.0,329.1 805.6,334.8 823.0,338.4 C840.4,342.0 851.3,342.4 865.7,347.6 C880.1,352.8 898.6,361.8 909.6,369.5 C920.6,377.2 926.5,387.8 931.6,393.7 C936.7,399.6 938.9,402.9 940.4,404.7"/>
<path d="M623.0,349.6 C634.2,348.9 666.0,345.9 690.0,345.4 C714.0,344.9 744.9,345.0 766.9,346.5 C788.9,348.0 805.3,350.7 821.8,354.2 C838.3,357.7 851.1,361.4 865.7,367.3 C880.3,373.2 898.6,382.9 909.6,389.3 C920.6,395.7 926.5,403.2 931.6,405.8 C936.7,408.4 938.9,404.9 940.4,404.7"/>
<path d="M850.5,238.0 C857.2,242.3 879.1,255.2 890.6,263.8 C902.1,272.4 910.6,277.2 919.2,289.6 C927.8,302.0 937.4,322.9 942.0,338.0 C946.6,353.1 947.3,369.8 947.0,380.5 C946.7,391.2 941.5,398.8 940.4,402.5"/>
<path d="M844.7,232.0 C846.4,230.7 851.2,225.9 855.0,224.0 C858.8,222.1 865.5,221.3 867.6,220.8"/>
<path d="M769.0,347.6 C768.1,351.2 764.3,360.4 763.6,369.5 C762.9,378.6 764.5,397.0 764.7,402.5"/>
<path d="M659.0,492.5 C658.8,489.0 657.8,479.8 658.0,471.4 C658.2,463.0 657.0,454.2 660.0,442.4 C663.0,430.6 669.6,411.8 676.0,400.5 C682.4,389.2 689.9,381.8 698.5,374.8 C707.1,367.8 716.1,363.4 727.5,358.7 C738.9,354.0 760.3,348.5 766.9,346.5"/>
</g>
<g fill="none" stroke="#000" stroke-width="1.6" stroke-linejoin="round">
<path d="M171.2,489.7 C169.2,488.6 162.7,487.9 159.3,483.2 C155.9,478.5 152.3,468.5 150.7,461.7 C149.1,454.9 149.2,448.5 149.7,442.4 C150.2,436.3 151.4,430.9 153.5,425.2 C155.6,419.5 159.3,415.2 162.0,408.0 C164.7,400.8 167.0,391.7 169.5,382.0 C172.0,372.3 174.4,359.3 177.0,350.0 C179.6,340.7 181.9,333.6 185.0,326.0 C188.1,318.4 191.1,312.2 195.4,304.5 C199.7,296.8 205.0,288.3 210.7,280.0 C216.4,271.7 226.4,258.8 229.5,254.5"/>
<path d="M389.2,489.7 C386.3,491.9 377.4,500.3 372.0,502.6 C366.6,504.9 360.6,507.5 357.0,503.6 C353.4,499.7 354.5,487.1 350.6,479.0 C346.7,470.9 339.8,462.5 333.4,455.3 C326.9,448.1 319.8,441.4 311.9,436.0 C304.0,430.6 294.9,425.9 286.0,423.0 C277.1,420.1 267.5,418.8 258.2,418.8 C248.9,418.8 238.1,419.4 230.2,423.0 C222.3,426.6 216.4,434.1 211.0,440.2 C205.6,446.3 202.3,452.4 198.0,459.6 C193.7,466.8 189.6,478.2 185.1,483.2 C180.6,488.2 173.5,488.6 171.2,489.7"/>
<path d="M975.5,340.0 C974.8,342.0 973.6,346.3 971.1,352.0 C968.6,357.7 965.0,365.9 960.2,374.0 C955.5,382.1 948.1,391.9 942.6,400.3 C937.1,408.7 932.7,416.7 927.2,424.4 C921.7,432.1 916.2,440.5 909.6,446.4 C903.0,452.3 895.0,457.4 887.7,459.6 C880.4,461.8 873.0,461.1 865.7,459.6 C858.4,458.1 851.0,454.8 843.7,450.8 C836.4,446.8 829.1,440.9 821.8,435.4 C814.5,429.9 806.4,422.5 799.8,417.9 C793.2,413.3 788.2,410.6 782.0,408.0 C775.8,405.4 770.5,402.9 762.5,402.5 C754.5,402.1 742.4,403.6 734.0,405.8 C725.6,408.0 717.9,410.0 712.0,415.7 C706.1,421.4 701.7,430.8 698.8,439.8 C695.9,448.9 695.4,461.1 694.4,470.0 C693.4,478.9 693.2,489.2 693.0,493.0"/>
<path d="M659,492.5 L693,493.5"/>
<path d="M643.7,145.8 L666.3,165.1 L688.8,184.4 L709.8,205.4" stroke-width="1.2"/>
</g>
</svg><svg class="abs" style="left:0;top:0" width="0" height="0"><defs><pattern id="chk" width="2" height="2" patternUnits="userSpaceOnUse"><rect width="2" height="2" fill="#a8a8ae"/><rect width="1" height="1" fill="#78787e"/><rect x="1" y="1" width="1" height="1" fill="#78787e"/></pattern><radialGradient id="gball" cx="0.35" cy="0.35" r="0.7"><stop offset="0" stop-color="#f0f0f0"/><stop offset="0.6" stop-color="#a0a0a0"/><stop offset="1" stop-color="#505050"/></radialGradient></defs></svg>
<svg class="abs" style="left:0;top:0" width="1328" height="538" viewBox="0 120 1328 538">
<g stroke="#22dd22" stroke-width="2" fill="none" stroke-dasharray="11 9 3 9">
<path d="M915.3,120 L1047,658"/>
<path d="M1206.8,120 L870.5,658"/>
</g>
<g stroke="#ffffff" stroke-width="1.1" fill="none" stroke-linejoin="round">
<path d="M784.3,408.3 C774,409.5 767.5,412.5 765.8,416.5 C761.5,425 758,432 758.7,438 C759.5,445 763,449.5 768,451.4 C774,454.5 781,456 787.4,456 C840,457.5 900,456.5 946.2,454.4 C952,452.5 958,449 959.5,445.2 C958.5,438 953,431.5 946.2,427.8 C910,417 840,411 784.3,408.3 Z"/>
<path d="M943.1,459.6 C948,460.5 950,462.5 949.3,464.2 C948.5,466.5 946.5,467.5 945.2,467.8 C905,485 810,508 716.6,516.3 C710,516.5 705,513 706.4,509.8 C714,497 732,482 751.5,474 C765,469 775,466.5 781.2,466.3 C830,463 900,460 943.1,459.6 Z"/>
<path d="M960.9,153.4 C963,155 965,156 966.7,158.1 L975,188.6 C975,193 975,196 973.7,199.1 C968,203 962,207 957.3,212 C950,220 944,227 938.6,235.5 C928,255 920,275 915.2,294 L911.6,292.9 C908,280 905,270 904.6,258.9 C904,250 905,244 905.8,239 C912,220 918,203 926.9,188.6 C938,172 950,160 960.9,153.4 Z"/>
<path d="M524.9,406.7 L545.4,485.7 L515.1,532.6 L495.6,452.6 Z"/>
<path d="M992.5,366 L1001.3,400.3 L1014,380.4"/><path d="M1017,385.7 L1024.7,418.9 L1061.8,418.9"/><path d="M1059,415 L1047,433.5 L1084.3,433.5"/>
<path d="M997.4,455 L973,355.4"/><path d="M1041,454 L1103.8,452"/><path d="M1014,427.7 L1035.5,394.5"/>
<path d="M478.6,137.3 C487,139 493,142 496.2,147 L513.8,189.4 C514,194 511,197 508,198.2 L437.6,204 L399.6,207.6 C385,207 372,204 367.3,199.7 C362,194 362,188 363,183.6 C364,179 366,176 368.8,173.3 C385,163 400,157 417,151.4 C440,143 460,139 478.6,137.3 Z"/>
<path d="M518.2,136 L625,145 C640,150 650,155 655.8,160 L685,188 C686,193 686,196 683.6,198.2 L540,198.2 C533,196 528,193 525.5,189.4 L508,147 C508,141 512,137 518.2,136 Z"/>
<path d="M436,204.6 C445,207 450,211 452.3,215.8 L465.4,274.3 C464,276 460,277 456.7,277.3 L352.7,281.7 C340,281 330,278 326.4,274.3 C321,266 319,258 320.5,251 C321,246 323,242 326.4,239.2 C345,225 370,215 396.6,208.5 C410,206 425,205 436,204.6 Z"/>
<path d="M475.7,203.5 L584,210.5 C597,215 606,220 613.3,226 C625,240 635,250 641,259.7 C642,265 641,269 638.2,271.4 L490.3,277.3 C484,275 479,271 477,267 L464,215.8 C465,209 470,205 475.7,203.5 Z"/>
<path d="M330,174 C315,185 298,198 292.5,207.5 C288,218 286,226 284,232.5 C280,245 277,252 273.75,257.5 C268,270 263,280 257,288.75 C250,298 240,308 234,313.75 C231,315 229,315 228,313.75 C225,305 223,295 223.75,286.7 C224,275 226,265 230,255.4 C240,245 250,238 259,232.5 C268,227 276,223 284,220 C290,216 294,212 296.7,209.6 C310,198 320,185 330,174 Z"/>
<path d="M306.9,291 C330,284 370,275 394.7,272 C402,272 406,274 408,278 C412,290 413,320 415.2,346.6 C415,352 412,356 406.4,357 L304,357 C292,357 285,354 283.4,349.6 C278,340 276,330 277.6,323.2 C279,312 285,303 292,298 Z"/>
<path d="M432,270 L547,276.4 C560,280 566,286 570.4,294 C580,308 590,320 596.8,329 C597,338 594,343 588,345 L441.5,357 C433,355 428,350 427,343.7 L422.5,285 C422,276 426,271 432,270 Z"/>
<path d="M480,334 L660,334"/>
<path d="M601,194 L684,198 C690,196 690,190 686,185 L650,152 C640,145 632,143 620,143"/>
<path d="M560,334 L758.8,332.5"/>
</g>
<g fill="#fff"><circle cx="784.3" cy="408.3" r="1.6"/><circle cx="765.8" cy="416.5" r="1.6"/><circle cx="758.7" cy="438" r="1.6"/><circle cx="787.4" cy="456" r="1.6"/><circle cx="946.2" cy="454.4" r="1.6"/><circle cx="959.5" cy="445.2" r="1.6"/><circle cx="943.1" cy="459.6" r="1.6"/><circle cx="945.2" cy="467.8" r="1.6"/><circle cx="781.2" cy="466.3" r="1.6"/><circle cx="728" cy="487.2" r="1.6"/><circle cx="706.4" cy="509.8" r="1.6"/><circle cx="716.6" cy="516.3" r="1.6"/><circle cx="960.9" cy="153.4" r="1.6"/><circle cx="966.7" cy="158.1" r="1.6"/><circle cx="975" cy="188.6" r="1.6"/><circle cx="973.7" cy="199.1" r="1.6"/><circle cx="915.2" cy="294" r="1.6"/><circle cx="911.6" cy="292.9" r="1.6"/><circle cx="904.6" cy="258.9" r="1.6"/><circle cx="905.8" cy="239" r="1.6"/><circle cx="478.6" cy="137.3" r="1.6"/><circle cx="496.2" cy="147" r="1.6"/><circle cx="513.8" cy="189.4" r="1.6"/><circle cx="508" cy="198.2" r="1.6"/><circle cx="437.6" cy="204" r="1.6"/><circle cx="399.6" cy="207.6" r="1.6"/><circle cx="367.3" cy="199.7" r="1.6"/><circle cx="368.8" cy="173.3" r="1.6"/><circle cx="518.2" cy="136" r="1.6"/><circle cx="625" cy="145" r="1.6"/><circle cx="655.8" cy="160" r="1.6"/><circle cx="685" cy="188" r="1.6"/><circle cx="683.6" cy="198.2" r="1.6"/><circle cx="540" cy="198.2" r="1.6"/><circle cx="525.5" cy="189.4" r="1.6"/><circle cx="508" cy="147" r="1.6"/><circle cx="452.3" cy="215.8" r="1.6"/><circle cx="465.4" cy="274.3" r="1.6"/><circle cx="456.7" cy="277.3" r="1.6"/><circle cx="352.7" cy="281.7" r="1.6"/><circle cx="326.4" cy="274.3" r="1.6"/><circle cx="326.4" cy="239.2" r="1.6"/><circle cx="396.6" cy="208.5" r="1.6"/><circle cx="475.7" cy="203.5" r="1.6"/><circle cx="584" cy="210.5" r="1.6"/><circle cx="613.3" cy="226" r="1.6"/><circle cx="641" cy="259.7" r="1.6"/><circle cx="638.2" cy="271.4" r="1.6"/><circle cx="490.3" cy="277.3" r="1.6"/><circle cx="477" cy="267" r="1.6"/><circle cx="464" cy="215.8" r="1.6"/><circle cx="306.9" cy="291" r="1.6"/><circle cx="394.7" cy="272" r="1.6"/><circle cx="412" cy="296" r="1.6"/><circle cx="415.2" cy="346.6" r="1.6"/><circle cx="406.4" cy="357" r="1.6"/><circle cx="304" cy="357" r="1.6"/><circle cx="283.4" cy="349.6" r="1.6"/><circle cx="286.4" cy="305.6" r="1.6"/><circle cx="432" cy="270" r="1.6"/><circle cx="547" cy="276.4" r="1.6"/><circle cx="570.4" cy="294" r="1.6"/><circle cx="596.8" cy="329" r="1.6"/><circle cx="588" cy="345" r="1.6"/><circle cx="441.5" cy="357" r="1.6"/><circle cx="427" cy="343.7" r="1.6"/><circle cx="422.5" cy="285" r="1.6"/></g>
<g fill="#000"><circle cx="758.8" cy="332.5" r="2.2"/><circle cx="287" cy="245" r="2.5"/><circle cx="229.7" cy="256.8" r="2.2"/><circle cx="293.2" cy="204.7" r="2.2"/><circle cx="255.7" cy="287.7" r="2.2"/><circle cx="478" cy="333" r="2.5"/></g>
<g stroke="#fff" stroke-width="1"><path d="M186,315L194,323M194,315L186,323"/><path d="M448,166L456,174M456,166L448,174"/><path d="M414,262L422,270M422,262L414,270"/><path d="M475,331L483,339M483,331L475,339"/><path d="M849,226L857,234M857,226L849,234"/></g>
<g stroke="#e8d010" stroke-width="1.3" fill="none"><path d="M997.4,455 L985.7,412"/><path d="M997.4,455 L1014,427.7"/><path d="M951.5,457 L1041,454"/></g>
<g fill="#e8d010" font-family="Liberation Sans" font-size="11"><text x="983" y="421">V</text><text x="1006" y="435">H</text><text x="1034" y="451">H</text><text x="955" y="461">M</text></g>
<g fill="#fff" font-family="Liberation Sans" font-size="11"><text x="971" y="359">z</text><text x="1101" y="454">x</text><text x="1031" y="399">y</text></g>
<circle cx="997.4" cy="455" r="2.5" fill="#e8d010"/>
<g stroke="#e0d0f0" stroke-width="1.5" stroke-linejoin="round">
<path d="M1192.8,238.3 L1208.4,214 C1215,210 1225,208.5 1235,208.6 C1243,208.8 1248,209.5 1250.6,211 C1254,213 1256,216 1256,218.75 C1256,222 1255,224.5 1253.75,226.6 C1250,231 1245,234 1239.7,236 C1236,237 1234,237.5 1232,237.5 Z" fill="#1f4060"/>
<path d="M1205.3,153 C1207,150 1210,147.5 1213,147.7 C1217,147.5 1221,151 1224,156.3 Z" fill="#1f4a5a"/>
<path d="M1205.3,153 L1224,156.3 C1230,158 1235,160.5 1239.7,164 C1246,169 1250,172 1252,176.6 C1255,181 1256.5,186 1256.9,191.4 L1215.5,192.2 Z" fill="#000033"/>
<path d="M1224,156.3 L1228.75,170.3 L1215.5,192.2 M1202.5,143.4 L1221.7,221.9" fill="none"/>
</g>
<circle cx="1202.5" cy="143.4" r="3.4" fill="#e0d0f0"/><rect x="1218" y="222" width="9" height="9" fill="#cc0000"/>
<g fill="#e8d010" font-family="Liberation Sans" font-size="11"><text x="1212" y="139">z</text><text x="1241" y="168">y</text><text x="1267" y="187">x</text></g>
<g stroke="#fff" stroke-width="1.1" fill="none"><path d="M1289.6,611.4 L1293.75,629 L1316,629 M1293.75,629 L1301,619"/><path d="M1289,604 H1295 L1289,610.5 H1295"/><path d="M1301.5,612.5 L1304.5,618 M1307.5,612.5 L1302.5,622"/><path d="M1315.5,623.5 L1320.5,629.5 M1320.5,623.5 L1315.5,629.5"/></g>
</svg>
<div class="abs" style="left:0;top:0;width:2px;height:538px;background:#8a8a90"></div>
<div class="abs" style="left:2px;top:0;width:15px;height:538px;background:repeating-conic-gradient(#7070e0 0 25%,#3a3a70 0 50%) 0 0/2px 2px"></div>
<div class="abs" style="left:2px;top:1px;width:15px;height:15px;background:#7c7cf2"></div>
<svg class="abs" style="left:4px;top:4px" width="11" height="10"><path d="M5.5,0L11,9H0Z" fill="#000"/></svg>
<div class="abs" style="left:2px;top:32px;width:15px;height:52px;background:#7c7cf2;border-top:1px solid #b0b0ff"></div>
<div class="abs" style="left:2px;top:522px;width:15px;height:16px;background:#7c7cf2"></div>
<svg class="abs" style="left:4px;top:526px" width="11" height="10"><path d="M5.5,10L11,1H0Z" fill="#000"/></svg>
<div class="abs" style="left:23px;top:0;width:2px;height:8px;background:#fff"></div>
<div class="abs" style="left:25px;top:11px;width:12px;height:2px;background:#fff"></div>
<div class="abs" style="left:42px;top:21px;width:2px;height:517px;background:#fff"></div>
<svg class="abs" style="left:18px;top:5px" width="12" height="12"><g transform="translate(6,6)"><circle r="5.5" fill="url(#gball)"/><path d="M-3.5,0H3.5" stroke="#000" stroke-width="2"/></g></svg>
<svg class="abs" style="left:37px;top:1px" width="22" height="22"><path d="M3,3 L14,1 L17,6 L15,12 L19,14 L10,20 L2,18 Z" fill="#fe8" stroke="#123" stroke-width="0.8"/><path d="M6,5L9,9L12,5L14,9" stroke="#c22" stroke-width="1.2" fill="none"/><path d="M2,15C6,12 10,14 14,11M17,2C19,5 18,8 16,10" stroke="#3de" stroke-width="1.2" fill="none"/></svg>
<div class="t tree-t" style="left:61px;top:6px;text-decoration:underline">Set géométrique.2</div>
<div class="abs" style="left:44px;top:37.0px;width:11px;height:2px;background:#fff"></div>
<svg class="abs" style="left:55px;top:25px" width="22" height="22"><rect x="0" y="0" width="22" height="22" fill="url(#chk)"/><path d="M1,3 L13,1 L21,9 L19,21 L1,21 Z" fill="#7cd8e8" stroke="#24c" stroke-width="0.8"/><path d="M6,13L18,5" stroke="#ee0" stroke-width="1.5" stroke-dasharray="2 1"/><path d="M4,8C8,6 10,10 14,8M4,16C8,14 12,18 18,13" stroke="#267" stroke-width="1" fill="none"/></svg>
<div class="t tree-t" style="left:79.5px;top:32.5px;">Combine.2</div>
<div class="abs" style="left:44px;top:63.25px;width:11px;height:2px;background:#fff"></div>
<svg class="abs" style="left:37px;top:58px" width="12" height="12"><g transform="translate(6,6)"><circle r="5.5" fill="url(#gball)"/><path d="M-3.5,0H3.5" stroke="#000" stroke-width="2"/><path d="M0,-3.5V3.5" stroke="#000" stroke-width="2"/></g></svg>
<svg class="abs" style="left:55px;top:51px" width="22" height="22"><path d="M1,17 L7,10 L21,10 L15,17 Z" fill="#fe8" stroke="#123" stroke-width="1"/><path d="M1,18H15L21,11" stroke="#3bb" stroke-width="1" fill="none"/></svg>
<div class="t tree-t" style="left:79.5px;top:58.75px;">Plan.3</div>
<div class="abs" style="left:44px;top:89.5px;width:11px;height:2px;background:#fff"></div>
<svg class="abs" style="left:37px;top:84px" width="12" height="12"><g transform="translate(6,6)"><circle r="5.5" fill="url(#gball)"/><path d="M-3.5,0H3.5" stroke="#000" stroke-width="2"/><path d="M0,-3.5V3.5" stroke="#000" stroke-width="2"/></g></svg>
<svg class="abs" style="left:55px;top:78px" width="22" height="22"><rect x="0" y="0" width="22" height="22" fill="url(#chk)"/><path d="M2,13H12V21H2Z" fill="#fff" opacity="0.8"/><path d="M2,15H12M2,17H12M2,19H12M4,13V21M7,13V21M10,13V21" stroke="#333" stroke-width="0.6"/><path d="M11,20L15,8L20,20Z" fill="#ddd"/><path d="M8,12L18,2" stroke="#ee8" stroke-width="1.2" stroke-dasharray="2 1"/><path d="M3,4H9V10H3Z" fill="#eee" opacity="0.7"/></svg>
<div class="t tree-t" style="left:79.5px;top:85.0px;">Esquisse.11</div>
<div class="abs" style="left:44px;top:115.75px;width:11px;height:2px;background:#fff"></div>
<svg class="abs" style="left:55px;top:104px" width="22" height="22"><rect x="0" y="0" width="22" height="22" fill="url(#chk)"/><path d="M3,12L10,6L20,10L14,19L6,20Z" fill="#5bd" stroke="#124" stroke-width="0.8"/><path d="M5,8C8,2 12,4 14,6" stroke="#24c" stroke-width="1.5" fill="none"/><path d="M10,13L18,10" stroke="#fff" stroke-width="1"/></svg>
<div class="t tree-t" style="left:79.5px;top:111.25px;">Balayage.1</div>
<div class="abs" style="left:44px;top:142.0px;width:11px;height:2px;background:#fff"></div>
<svg class="abs" style="left:37px;top:136px" width="12" height="12"><g transform="translate(6,6)"><circle r="5.5" fill="url(#gball)"/><path d="M-3.5,0H3.5" stroke="#000" stroke-width="2"/><path d="M0,-3.5V3.5" stroke="#000" stroke-width="2"/></g></svg>
<svg class="abs" style="left:55px;top:130px" width="22" height="22"><rect x="0" y="0" width="22" height="22" fill="url(#chk)"/><path d="M2,13H12V21H2Z" fill="#fff" opacity="0.8"/><path d="M2,15H12M2,17H12M2,19H12M4,13V21M7,13V21M10,13V21" stroke="#333" stroke-width="0.6"/><path d="M11,20L15,8L20,20Z" fill="#ddd"/><path d="M8,12L18,2" stroke="#ee8" stroke-width="1.2" stroke-dasharray="2 1"/><path d="M3,4H9V10H3Z" fill="#eee" opacity="0.7"/></svg>
<div class="t tree-t" style="left:79.5px;top:137.5px;">Esquisse.12</div>
<div class="abs" style="left:44px;top:168.25px;width:11px;height:2px;background:#fff"></div>
<svg class="abs" style="left:37px;top:163px" width="12" height="12"><g transform="translate(6,6)"><circle r="5.5" fill="url(#gball)"/><path d="M-3.5,0H3.5" stroke="#000" stroke-width="2"/><path d="M0,-3.5V3.5" stroke="#000" stroke-width="2"/></g></svg>
<svg class="abs" style="left:55px;top:156px" width="22" height="22"><rect x="0" y="0" width="22" height="22" fill="url(#chk)"/><path d="M1,12C5,8 8,18 12,14C15,11 18,12 21,9V21H1Z" fill="#5bd" opacity="0.9"/><path d="M1,12C5,8 8,18 12,14C15,11 18,12 21,9" stroke="#22c" stroke-width="1.5" fill="none"/><circle cx="17" cy="5" r="3" fill="none" stroke="#ee0" stroke-width="1"/><path d="M4,8L14,4" stroke="#ee8" stroke-width="1"/></svg>
<div class="t tree-t" style="left:79.5px;top:163.75px;">Découpe.1</div>
<div class="abs" style="left:44px;top:194.5px;width:11px;height:2px;background:#fff"></div>
<svg class="abs" style="left:37px;top:189px" width="12" height="12"><g transform="translate(6,6)"><circle r="5.5" fill="url(#gball)"/><path d="M-3.5,0H3.5" stroke="#000" stroke-width="2"/><path d="M0,-3.5V3.5" stroke="#000" stroke-width="2"/></g></svg>
<svg class="abs" style="left:55px;top:182px" width="22" height="22"><rect x="0" y="0" width="22" height="22" fill="url(#chk)"/><path d="M2,8L10,2L21,6L19,18L9,21L2,16Z" fill="#5bd" stroke="#22c" stroke-width="0.8"/><path d="M4,14C8,9 12,12 18,6" stroke="#ee0" stroke-width="1.6" fill="none"/><path d="M3,10L9,6" stroke="#24c" stroke-width="1.5"/></svg>
<div class="t tree-t" style="left:79.5px;top:190.0px;">Intersection.1</div>
<div class="abs" style="left:44px;top:220.75px;width:11px;height:2px;background:#fff"></div>
<svg class="abs" style="left:55px;top:209px" width="22" height="22"><rect x="0" y="0" width="22" height="22" fill="url(#chk)"/><path d="M1,12C5,8 8,18 12,14C15,11 18,12 21,9V21H1Z" fill="#5bd" opacity="0.9"/><path d="M1,12C5,8 8,18 12,14C15,11 18,12 21,9" stroke="#22c" stroke-width="1.5" fill="none"/><circle cx="17" cy="5" r="3" fill="none" stroke="#ee0" stroke-width="1"/><path d="M4,8L14,4" stroke="#ee8" stroke-width="1"/></svg>
<div class="t tree-t" style="left:79.5px;top:216.25px;">Découpe.3</div>
<div class="abs" style="left:44px;top:247.0px;width:11px;height:2px;background:#fff"></div>
<svg class="abs" style="left:37px;top:242px" width="12" height="12"><g transform="translate(6,6)"><circle r="5.5" fill="url(#gball)"/><path d="M-3.5,0H3.5" stroke="#000" stroke-width="2"/><path d="M0,-3.5V3.5" stroke="#000" stroke-width="2"/></g></svg>
<svg class="abs" style="left:55px;top:235px" width="22" height="22"><rect x="0" y="0" width="22" height="22" fill="url(#chk)"/><path d="M2,13H12V21H2Z" fill="#fff" opacity="0.8"/><path d="M2,15H12M2,17H12M2,19H12M4,13V21M7,13V21M10,13V21" stroke="#333" stroke-width="0.6"/><path d="M11,20L15,8L20,20Z" fill="#ddd"/><path d="M8,12L18,2" stroke="#ee8" stroke-width="1.2" stroke-dasharray="2 1"/><path d="M3,4H9V10H3Z" fill="#eee" opacity="0.7"/></svg>
<div class="t tree-t" style="left:79.5px;top:242.5px;">Esquisse.14</div>
<div class="abs" style="left:44px;top:273.25px;width:11px;height:2px;background:#fff"></div>
<svg class="abs" style="left:37px;top:268px" width="12" height="12"><g transform="translate(6,6)"><circle r="5.5" fill="url(#gball)"/><path d="M-3.5,0H3.5" stroke="#000" stroke-width="2"/><path d="M0,-3.5V3.5" stroke="#000" stroke-width="2"/></g></svg>
<svg class="abs" style="left:55px;top:261px" width="22" height="22"><rect x="0" y="0" width="22" height="22" fill="url(#chk)"/><path d="M1,12C5,8 8,18 12,14C15,11 18,12 21,9V21H1Z" fill="#5bd" opacity="0.9"/><path d="M1,12C5,8 8,18 12,14C15,11 18,12 21,9" stroke="#22c" stroke-width="1.5" fill="none"/><circle cx="17" cy="5" r="3" fill="none" stroke="#ee0" stroke-width="1"/><path d="M4,8L14,4" stroke="#ee8" stroke-width="1"/></svg>
<div class="t tree-t" style="left:79.5px;top:268.75px;">Découpe.4</div>
<div class="abs" style="left:44px;top:299.5px;width:11px;height:2px;background:#fff"></div>
<svg class="abs" style="left:37px;top:294px" width="12" height="12"><g transform="translate(6,6)"><circle r="5.5" fill="url(#gball)"/><path d="M-3.5,0H3.5" stroke="#000" stroke-width="2"/><path d="M0,-3.5V3.5" stroke="#000" stroke-width="2"/></g></svg>
<svg class="abs" style="left:55px;top:288px" width="22" height="22"><rect x="0" y="0" width="22" height="22" fill="url(#chk)"/><path d="M2,13H12V21H2Z" fill="#fff" opacity="0.8"/><path d="M2,15H12M2,17H12M2,19H12M4,13V21M7,13V21M10,13V21" stroke="#333" stroke-width="0.6"/><path d="M11,20L15,8L20,20Z" fill="#ddd"/><path d="M8,12L18,2" stroke="#ee8" stroke-width="1.2" stroke-dasharray="2 1"/><path d="M3,4H9V10H3Z" fill="#eee" opacity="0.7"/></svg>
<div class="t tree-t" style="left:79.5px;top:295.0px;">Esquisse.15</div>
<div class="abs" style="left:44px;top:325.75px;width:11px;height:2px;background:#fff"></div>
<svg class="abs" style="left:37px;top:320px" width="12" height="12"><g transform="translate(6,6)"><circle r="5.5" fill="url(#gball)"/><path d="M-3.5,0H3.5" stroke="#000" stroke-width="2"/><path d="M0,-3.5V3.5" stroke="#000" stroke-width="2"/></g></svg>
<svg class="abs" style="left:55px;top:314px" width="22" height="22"><rect x="0" y="0" width="22" height="22" fill="url(#chk)"/><path d="M2,13H12V21H2Z" fill="#fff" opacity="0.8"/><path d="M2,15H12M2,17H12M2,19H12M4,13V21M7,13V21M10,13V21" stroke="#333" stroke-width="0.6"/><path d="M11,20L15,8L20,20Z" fill="#ddd"/><path d="M8,12L18,2" stroke="#ee8" stroke-width="1.2" stroke-dasharray="2 1"/><path d="M3,4H9V10H3Z" fill="#eee" opacity="0.7"/></svg>
<div class="t tree-t" style="left:79.5px;top:321.25px;">Esquisse.16</div>
<div class="abs" style="left:44px;top:352.0px;width:11px;height:2px;background:#fff"></div>
<svg class="abs" style="left:37px;top:346px" width="12" height="12"><g transform="translate(6,6)"><circle r="5.5" fill="url(#gball)"/><path d="M-3.5,0H3.5" stroke="#000" stroke-width="2"/></g></svg>
<svg class="abs" style="left:55px;top:340px" width="22" height="22"><ellipse cx="11" cy="13" rx="9" ry="8" fill="#5cd" stroke="#123" stroke-width="1"/><circle cx="7" cy="11" r="1.5" fill="#ee0"/><circle cx="11" cy="9" r="1.5" fill="#ee0"/><circle cx="15" cy="12" r="1.5" fill="#ee0"/><circle cx="9" cy="15" r="1.5" fill="#ee0"/><circle cx="13" cy="17" r="1.5" fill="#ee0"/><path d="M4,2L10,6M18,2L12,6" stroke="#24c" stroke-width="1.4"/><path d="M15,4H21" stroke="#ee0" stroke-width="1.5"/></svg>
<div class="t tree-t" style="left:79.5px;top:347.5px;letter-spacing:0.4px;">Multi résultat.6 (Intersection)</div>
<div class="abs" style="left:63px;top:378.25px;width:11px;height:2px;background:#fff"></div>
<svg class="abs" style="left:75px;top:366px" width="22" height="22"><path d="M1,8L9,2L20,4L19,17L10,20L3,16Z" fill="#5cd" stroke="#123" stroke-width="1.2"/><path d="M5,14C8,8 12,9 17,5" stroke="#ee0" stroke-width="1.8" fill="none"/><path d="M3,16L8,20" stroke="#123" stroke-width="2"/></svg>
<div class="t tree-t" style="left:99px;top:373.75px">Intersection.4</div>
<div class="abs" style="left:63px;top:404.5px;width:11px;height:2px;background:#fff"></div>
<svg class="abs" style="left:75px;top:392px" width="22" height="22"><path d="M1,8L9,2L20,4L19,17L10,20L3,16Z" fill="#5cd" stroke="#123" stroke-width="1.2"/><path d="M5,14C8,8 12,9 17,5" stroke="#ee0" stroke-width="1.8" fill="none"/><path d="M3,16L8,20" stroke="#123" stroke-width="2"/></svg>
<div class="t tree-t" style="left:99px;top:400.0px">Intersection.5</div>
<div class="abs" style="left:44px;top:430.75px;width:11px;height:2px;background:#fff"></div>
<svg class="abs" style="left:37px;top:425px" width="12" height="12"><g transform="translate(6,6)"><circle r="5.5" fill="url(#gball)"/><path d="M-3.5,0H3.5" stroke="#000" stroke-width="2"/><path d="M0,-3.5V3.5" stroke="#000" stroke-width="2"/></g></svg>
<svg class="abs" style="left:55px;top:419px" width="22" height="22"><rect x="0" y="0" width="22" height="22" fill="url(#chk)"/><path d="M2,18C6,18 6,10 10,10C14,10 12,4 18,3" stroke="#3de" stroke-width="1.5" fill="none"/><path d="M3,19C7,19 7,11 11,11C15,11 13,5 19,4" stroke="#236" stroke-width="0.8" fill="none"/></svg>
<div class="t tree-t" style="left:79.5px;top:426.25px;">Spline.1</div>
<div class="abs" style="left:44px;top:457.0px;width:11px;height:2px;background:#fff"></div>
<svg class="abs" style="left:55px;top:445px" width="22" height="22"><rect x="0" y="0" width="22" height="22" fill="url(#chk)"/><path d="M4,19L20,2" stroke="#4de" stroke-width="1.5"/><path d="M2,20L20,3" stroke="#135" stroke-width="0.6"/><path d="M2,14L7,12L3,18L8,16" stroke="#b11" stroke-width="1.2" fill="none"/></svg>
<div class="t tree-t" style="left:79.5px;top:452.5px;">Axe Y</div>
<div class="abs" style="left:44px;top:483.25px;width:11px;height:2px;background:#fff"></div>
<svg class="abs" style="left:55px;top:471px" width="22" height="22"><rect x="0" y="0" width="22" height="22" fill="url(#chk)"/><path d="M4,19L20,2" stroke="#4de" stroke-width="1.5"/><path d="M2,20L20,3" stroke="#135" stroke-width="0.6"/><path d="M2,14L7,12L3,18L8,16" stroke="#b11" stroke-width="1.2" fill="none"/></svg>
<div class="t tree-t" style="left:79.5px;top:478.75px;">Axe Y</div>
<div class="abs" style="left:44px;top:509.5px;width:11px;height:2px;background:#fff"></div>
<svg class="abs" style="left:55px;top:498px" width="22" height="22"><rect x="0" y="0" width="22" height="22" fill="url(#chk)"/><path d="M4,19L20,2" stroke="#4de" stroke-width="1.5"/><path d="M2,20L20,3" stroke="#135" stroke-width="0.6"/><path d="M2,14L7,12L3,18L8,16" stroke="#b11" stroke-width="1.2" fill="none"/></svg>
<div class="t tree-t" style="left:79.5px;top:505.0px;">Axe Z</div>
<div class="abs" style="left:44px;top:535.75px;width:11px;height:2px;background:#fff"></div>
<svg class="abs" style="left:55px;top:524px" width="22" height="22"><rect x="0" y="0" width="22" height="22" fill="url(#chk)"/><path d="M4,19L20,2" stroke="#4de" stroke-width="1.5"/><path d="M2,20L20,3" stroke="#135" stroke-width="0.6"/><path d="M2,14L7,12L3,18L8,16" stroke="#b11" stroke-width="1.2" fill="none"/></svg>
<div class="t tree-t" style="left:79.5px;top:531.25px;">Axe Y</div>
<div class="abs" style="left:62px;top:365px;width:2px;height:41px;background:#fff"></div></div>
<div id="rtb" class="abs"></div>
<div class="abs" style="left:1333px;top:126px;width:15px;height:3px;background:#fff;border-bottom:1px solid #9898a8;border-right:1px solid #9898a8"></div>
<div class="abs" style="left:1333px;top:173px;width:15px;height:3px;background:#fff;border-bottom:1px solid #9898a8;border-right:1px solid #9898a8"></div>
<div class="abs" style="left:1333px;top:226px;width:15px;height:3px;background:#fff;border-bottom:1px solid #9898a8;border-right:1px solid #9898a8"></div>
<svg class="abs" style="left:1335px;top:134px" width="24" height="24" viewBox="0 0 24 24"><path d="M1,21L23,13L1,4Z" fill="#8cc4b8"/><circle cx="12" cy="11" r="6.5" fill="none" stroke="#333" stroke-width="3.5" stroke-dasharray="2.6 1.8"/><circle cx="12" cy="11" r="5" fill="none" stroke="#555" stroke-width="1.5"/><circle cx="12" cy="11" r="2.5" fill="#d0d0e4" stroke="#333" stroke-width="1.5"/></svg>
<svg class="abs" style="left:1337px;top:186px" width="24" height="24" viewBox="0 0 24 24"><path d="M4,2L4,20L9,15L14,22L17,20L13,14L20,14Z" fill="#fff" stroke="#f70" stroke-width="2"/></svg>
<svg class="abs" style="left:1357px;top:209px" width="8" height="5"><path d="M0,0H8L4,5Z" fill="#000"/></svg>
<svg class="abs" style="left:1336px;top:237px" width="24" height="24" viewBox="0 0 24 24"><path d="M2,6V21H20L14,6Z" fill="#fff" stroke="#123" stroke-width="1.5"/><path d="M8,18L19,3" stroke="#112" stroke-width="3"/><path d="M9,17L18,5" stroke="#4cd" stroke-width="1"/><circle cx="7" cy="16" r="3" fill="none" stroke="#4cd" stroke-width="1"/></svg>
<svg class="abs" style="left:1357px;top:260px" width="8" height="5"><path d="M0,0H8L4,5Z" fill="#000"/></svg>
<div id="btb" class="abs"></div>
<div class="abs" style="left:51px;top:663px;width:3px;height:15px;background:#fff;border-right:1px solid #9898a8;border-bottom:1px solid #9898a8"></div>
<div class="abs" style="left:130px;top:663px;width:3px;height:15px;background:#fff;border-right:1px solid #9898a8;border-bottom:1px solid #9898a8"></div>
<div class="abs" style="left:432px;top:663px;width:3px;height:15px;background:#fff;border-right:1px solid #9898a8;border-bottom:1px solid #9898a8"></div>
<div class="abs" style="left:647px;top:663px;width:3px;height:15px;background:#fff;border-right:1px solid #9898a8;border-bottom:1px solid #9898a8"></div>
<div class="abs" style="left:1007px;top:663px;width:3px;height:15px;background:#fff;border-right:1px solid #9898a8;border-bottom:1px solid #9898a8"></div>
<div class="abs" style="left:1111px;top:663px;width:3px;height:15px;background:#fff;border-right:1px solid #9898a8;border-bottom:1px solid #9898a8"></div>
<div class="abs" style="left:1157px;top:663px;width:3px;height:15px;background:#fff;border-right:1px solid #9898a8;border-bottom:1px solid #9898a8"></div>
<div class="abs" style="left:1204px;top:663px;width:3px;height:15px;background:#fff;border-right:1px solid #9898a8;border-bottom:1px solid #9898a8"></div>
<div class="abs" style="left:1252px;top:663px;width:3px;height:15px;background:#fff;border-right:1px solid #9898a8;border-bottom:1px solid #9898a8"></div>
<svg class="abs" style="left:62px;top:667px" width="24" height="24" viewBox="0 0 24 24"><path d="M2,14L10,20L22,12L14,8Z" fill="#fe6" stroke="#000" stroke-width="1"/><path d="M4,6L10,2V14L4,17Z" fill="#fe9" stroke="#000" stroke-width="1"/><path d="M12,14L21,4" stroke="#24e" stroke-width="2"/></svg>
<svg class="abs" style="left:92px;top:667px" width="24" height="24" viewBox="0 0 24 24"><path d="M2,4H8L10,6H14V10H2Z" fill="#fe6" stroke="#000" stroke-width="0.8"/><path d="M3,18L12,12L22,16L13,22Z" fill="#fe6" stroke="#22e" stroke-width="1.5"/><path d="M16,4C20,4 22,8 20,11" stroke="#24c" stroke-width="1.4" fill="none"/></svg>
<svg class="abs" style="left:141px;top:667px" width="24" height="24" viewBox="0 0 24 24"><path d="M4,2H15L20,7V22H4Z" fill="#ffd" stroke="#666" stroke-width="1"/><path d="M15,2V7H20" fill="#fff" stroke="#666" stroke-width="1"/></svg>
<svg class="abs" style="left:169px;top:667px" width="24" height="24" viewBox="0 0 24 24"><path d="M2,6H8L10,8H18V20H2Z" fill="#da4" stroke="#640" stroke-width="0.8"/><path d="M2,20L6,11H22L18,20Z" fill="#fd6" stroke="#640" stroke-width="0.8"/><path d="M15,4C19,2 22,4 22,8" stroke="#333" stroke-width="1" fill="none"/></svg>
<svg class="abs" style="left:197px;top:667px" width="24" height="24" viewBox="0 0 24 24"><rect x="2" y="2" width="20" height="20" rx="2" fill="#cc2" stroke="#000" stroke-width="1.4"/><rect x="5" y="3" width="14" height="8" fill="#fff" stroke="#000" stroke-width="0.6"/><path d="M7,5H17M7,7H17M7,9H17" stroke="#24c" stroke-width="0.8"/><rect x="6" y="15" width="12" height="7" fill="#000"/><rect x="13" y="16" width="3" height="5" fill="#fff"/></svg>
<svg class="abs" style="left:225px;top:667px" width="24" height="24" viewBox="0 0 24 24"><path d="M6,2H20L22,10H4Z" fill="#fff" stroke="#444" stroke-width="0.8"/><path d="M8,5H18M8,7H19" stroke="#24c" stroke-width="0.8"/><path d="M2,11H22V18H2Z" fill="#cc8" stroke="#444" stroke-width="1"/><path d="M2,14H22" stroke="#444"/><rect x="16" y="15" width="5" height="2" fill="#2a2"/></svg>
<svg class="abs" style="left:252px;top:667px" width="24" height="24" viewBox="0 0 24 24"><g fill="none" stroke="#a0a0a0" stroke-width="1.8"><path d="M8,2L14,14M16,2L10,14"/><circle cx="8" cy="18" r="3.5"/><circle cx="16" cy="18" r="3.5"/></g></svg>
<svg class="abs" style="left:280px;top:667px" width="24" height="24" viewBox="0 0 24 24"><g fill="#fff" stroke="#a0a0a0" stroke-width="1.5"><rect x="3" y="3" width="11" height="13"/><rect x="9" y="8" width="11" height="14"/><path d="M11,12H18M11,15H18M11,18H18" /></g></svg>
<svg class="abs" style="left:308px;top:667px" width="24" height="24" viewBox="0 0 24 24"><rect x="3" y="4" width="13" height="16" fill="#a86" stroke="#000" stroke-width="1"/><rect x="6" y="2" width="7" height="4" fill="#ccc" stroke="#000" stroke-width="0.8"/><rect x="10" y="10" width="12" height="12" fill="#fff" stroke="#000" stroke-width="1"/><path d="M12,14H20M12,17H20" stroke="#24c"/></svg>
<svg class="abs" style="left:337px;top:667px" width="24" height="24" viewBox="0 0 24 24"><path d="M4,12A8,8 0 1 1 12,20" stroke="#a0a0a0" stroke-width="3" fill="none"/><path d="M1,9L5,15L9,9Z" fill="#a0a0a0"/></svg>
<svg class="abs" style="left:366px;top:667px" width="24" height="24" viewBox="0 0 24 24"><path d="M20,12A8,8 0 1 0 12,20" stroke="#a0a0a0" stroke-width="3" fill="none"/><path d="M15,9L19,15L23,9Z" fill="#a0a0a0"/></svg>
<svg class="abs" style="left:396px;top:667px" width="24" height="24" viewBox="0 0 24 24"><path d="M2,4V18L6,14L10,21L12,20L8,13L13,13Z" fill="#fff" stroke="#000" stroke-width="1"/><text x="11" y="18" font-size="16" font-family="Liberation Sans" font-weight="bold" fill="#123">?</text></svg>
<svg class="abs" style="left:443px;top:667px" width="24" height="24" viewBox="0 0 24 24"><text x="0" y="17" font-size="15" font-family="Liberation Serif" font-style="italic" font-weight="bold" fill="#000">f</text><text x="7" y="18" font-size="10" font-family="Liberation Sans" font-weight="bold" fill="#000">(x)</text></svg>
<svg class="abs" style="left:471px;top:667px" width="24" height="24" viewBox="0 0 24 24"><ellipse cx="12" cy="10" rx="10" ry="8" fill="#fff" stroke="#000" stroke-width="1.6"/><path d="M6,16L3,22L10,17" fill="#fff" stroke="#000" stroke-width="1.4"/><path d="M7,8H17M7,11H15" stroke="#000" stroke-width="1.2" stroke-dasharray="2 1"/></svg>
<svg class="abs" style="left:497px;top:667px" width="24" height="24" viewBox="0 0 24 24"><circle cx="12" cy="9" r="3" fill="none" stroke="#a0a0a0" stroke-width="1.5"/><circle cx="12" cy="16" r="3" fill="none" stroke="#a0a0a0" stroke-width="1.5"/></svg>
<svg class="abs" style="left:522px;top:667px" width="24" height="24" viewBox="0 0 24 24"><rect x="2" y="3" width="20" height="18" fill="#fff" stroke="#22a" stroke-width="1"/><rect x="2" y="3" width="20" height="4" fill="#22a"/><path d="M2,11H22M2,15H22M7,3V21M12,3V21M17,3V21" stroke="#22a" stroke-width="1.2"/></svg>
<svg class="abs" style="left:552px;top:667px" width="24" height="24" viewBox="0 0 24 24"><rect x="2" y="9" width="5" height="5" fill="#fff" stroke="#24c"/><rect x="16" y="2" width="6" height="5" fill="#fff" stroke="#24c"/><rect x="16" y="10" width="6" height="5" fill="#fff" stroke="#24c"/><rect x="16" y="17" width="6" height="5" fill="#fff" stroke="#24c"/><path d="M7,11H12M12,4V20M12,4H16M12,12H16M12,20H16" stroke="#e22" stroke-width="1" stroke-dasharray="2 1"/></svg>
<svg class="abs" style="left:580px;top:667px" width="24" height="24" viewBox="0 0 24 24"><path d="M7,10V6A5,5 0 0 1 17,6V10" stroke="#444" stroke-width="2.5" fill="none"/><rect x="4" y="10" width="16" height="12" rx="2" fill="#888" stroke="#222" stroke-width="1"/><circle cx="12" cy="16" r="2" fill="#eee"/></svg>
<svg class="abs" style="left:608px;top:667px" width="24" height="24" viewBox="0 0 24 24"><rect x="2" y="2" width="7" height="5" fill="#fff" stroke="#24c"/><rect x="2" y="9" width="7" height="5" fill="#4c4" stroke="#24c"/><rect x="2" y="16" width="7" height="5" fill="#fff" stroke="#24c"/><text x="9" y="17" font-size="13" font-family="Liberation Sans" fill="#000">}=</text></svg>
<svg class="abs" style="left:656px;top:667px" width="24" height="24" viewBox="0 0 24 24"><path d="M2,12L8,10L12,2L14,3L13,10L22,12L20,14L13,14L14,20L11,22L8,14L2,14Z" fill="#4cf" stroke="#048" stroke-width="0.8"/></svg>
<svg class="abs" style="left:685px;top:667px" width="24" height="24" viewBox="0 0 24 24"><rect x="1" y="2" width="22" height="20" fill="#fe6" stroke="#000" stroke-width="1"/><path d="M12,4V20M4,12H20M9,7L12,4L15,7M9,17L12,20L15,17M7,9L4,12L7,15M17,9L20,12L17,15" stroke="#000" stroke-width="1.2" fill="none"/></svg>
<svg class="abs" style="left:713px;top:667px" width="24" height="24" viewBox="0 0 24 24"><path d="M12,1V23M1,12H23" stroke="#113" stroke-width="2.5"/><path d="M8,5L12,0L16,5ZM8,19L12,24L16,19ZM5,8L0,12L5,16ZM19,8L24,12L19,16Z" fill="#113"/><circle cx="12" cy="12" r="2.5" fill="#4cf"/></svg>
<svg class="abs" style="left:741px;top:667px" width="24" height="24" viewBox="0 0 24 24"><ellipse cx="13" cy="13" rx="9" ry="6" fill="#fcd" stroke="#123" stroke-width="1.2"/><path d="M3,11C6,4 16,4 21,8" stroke="#123" stroke-width="1.5" fill="none"/><path d="M8,14L14,14" stroke="#24c" stroke-width="2"/></svg>
<svg class="abs" style="left:769px;top:667px" width="24" height="24" viewBox="0 0 24 24"><circle cx="9" cy="9" r="7" fill="#fff" stroke="#000" stroke-width="2"/><path d="M6,9H12M9,6V12" stroke="#24c" stroke-width="2"/><path d="M14,14L21,21" stroke="#000" stroke-width="3.5"/></svg>
<svg class="abs" style="left:797px;top:667px" width="24" height="24" viewBox="0 0 24 24"><circle cx="9" cy="9" r="7" fill="#fff" stroke="#000" stroke-width="2"/><path d="M6,9H12" stroke="#24c" stroke-width="2"/><path d="M14,14L21,21" stroke="#000" stroke-width="3.5"/></svg>
<svg class="abs" style="left:825px;top:667px" width="24" height="24" viewBox="0 0 24 24"><path d="M2,20L10,14H22L14,20Z" fill="#4cf" stroke="#246" stroke-width="1"/><path d="M12,17V3M9,6L12,2L15,6" stroke="#e80" stroke-width="1.5" fill="none"/><path d="M6,8H18" stroke="#246" stroke-dasharray="2 1"/></svg>
<svg class="abs" style="left:853px;top:667px" width="24" height="24" viewBox="0 0 24 24"><rect x="2" y="2" width="20" height="20" fill="#48f" stroke="#123"/><path d="M12,2V22M2,12H22" stroke="#fff" stroke-width="1.5"/><rect x="14" y="4" width="6" height="6" fill="#4cf"/></svg>
<svg class="abs" style="left:881px;top:667px" width="24" height="24" viewBox="0 0 24 24"><path d="M3,8L9,2H22V16L16,22H3Z" fill="#4cf" stroke="#123" stroke-width="1.3"/><path d="M3,8H16V22M16,8L22,2" stroke="#123" stroke-width="1.3" fill="none"/></svg>
<svg class="abs" style="left:911px;top:667px" width="24" height="24" viewBox="0 0 24 24"><rect x="3" y="2" width="16" height="20" rx="3" fill="#fff" stroke="#000" stroke-width="1.2"/><text x="7" y="17" font-size="14" font-family="Liberation Sans" fill="#000">?</text></svg>
<svg class="abs" style="left:941px;top:667px" width="24" height="24" viewBox="0 0 24 24"><rect x="2" y="2" width="20" height="20" fill="#4cf" stroke="#123"/><path d="M4,16L10,6L20,8L14,18Z" fill="#fe9" stroke="#123" stroke-width="1.3"/></svg>
<svg class="abs" style="left:969px;top:667px" width="24" height="24" viewBox="0 0 24 24"><rect x="2" y="4" width="20" height="18" fill="#4cf" stroke="#123"/><path d="M5,16L10,10L19,12L14,18Z" fill="#fe9" stroke="#123" stroke-width="1.3"/></svg>
<svg class="abs" style="left:1017px;top:667px" width="24" height="24" viewBox="0 0 24 24"><path d="M2,16H22V22H2Z" fill="#fe8" stroke="#24c" stroke-width="1"/><path d="M5,16V19M9,16V19M13,16V19M17,16V19" stroke="#24c"/><path d="M2,7H22M2,7L6,4M2,7L6,10M22,7L18,4M22,7L18,10M2,2V12M22,2V12" stroke="#24c" stroke-width="1.3" fill="none"/></svg>
<svg class="abs" style="left:1045px;top:667px" width="24" height="24" viewBox="0 0 24 24"><path d="M4,4H16L20,8V16H4Z" fill="#444" stroke="#000"/><circle cx="9" cy="9" r="4" fill="#4cf"/><path d="M14,16V22H20" stroke="#000" stroke-width="2" fill="none"/></svg>
<svg class="abs" style="left:1073px;top:667px" width="24" height="24" viewBox="0 0 24 24"><path d="M8,4H16V8H8Z" fill="#660" stroke="#000"/><path d="M5,8H19L20,22H4Z" fill="#cb4" stroke="#000"/><path d="M9,10V20" stroke="#ffa" stroke-width="2"/></svg>
<svg class="abs" style="left:1121px;top:667px" width="24" height="24" viewBox="0 0 24 24"><path d="M2,14L8,10H22V20L16,24H2Z" fill="#fff" stroke="#000"/><circle cx="8" cy="4" r="3" fill="#24c"/><path d="M11,4C16,2 20,4 20,9M17,7L20,10L22,7" stroke="#24c" stroke-width="1.4" fill="none"/></svg>
<svg class="abs" style="left:1167px;top:667px" width="24" height="24" viewBox="0 0 24 24"><path d="M2,8L14,4L22,8L20,18L10,22L2,18Z" fill="#f80" stroke="#a40"/><path d="M8,10L12,18L16,10" fill="#fe6"/><path d="M4,9V18M18,6V14" stroke="#fff" stroke-width="1"/></svg>
<svg class="abs" style="left:1214px;top:667px" width="24" height="24" viewBox="0 0 24 24"><rect x="1" y="7" width="22" height="14" rx="2" fill="#222"/><circle cx="12" cy="14" r="5" fill="#fff"/><circle cx="12" cy="14" r="3" fill="#222"/><rect x="7" y="4" width="7" height="3" fill="#444"/></svg>
<svg class="abs" style="left:1261px;top:667px" width="24" height="24" viewBox="0 0 24 24"><rect x="4" y="2" width="5" height="20" fill="#fff" stroke="#000" stroke-width="1"/><rect x="1" y="12" width="20" height="5" fill="#fff" stroke="#000" stroke-width="1"/><path d="M5,5H7M5,8H7M5,11H7M5,14H7M5,18H7M12,13V15M15,13V15M18,13V15" stroke="#000" stroke-width="0.8"/><path d="M12,2V10M10,4L12,2L14,4M10,8L12,10L14,8M10,20H20M12,18L10,20L12,22M18,18L20,20L18,22" stroke="#b00" stroke-width="1.2" fill="none"/></svg>
<svg class="abs" style="left:81px;top:689px" width="8" height="5"><path d="M0,0H8L4,5Z" fill="#000"/></svg>
<svg class="abs" style="left:111px;top:689px" width="8" height="5"><path d="M0,0H8L4,5Z" fill="#000"/></svg>
<svg class="abs" style="left:356px;top:689px" width="8" height="5"><path d="M0,0H8L4,5Z" fill="#000"/></svg>
<svg class="abs" style="left:385px;top:689px" width="8" height="5"><path d="M0,0H8L4,5Z" fill="#000"/></svg>
<svg class="abs" style="left:541px;top:689px" width="8" height="5"><path d="M0,0H8L4,5Z" fill="#000"/></svg>
<svg class="abs" style="left:599px;top:689px" width="8" height="5"><path d="M0,0H8L4,5Z" fill="#000"/></svg>
<svg class="abs" style="left:903px;top:689px" width="8" height="5"><path d="M0,0H8L4,5Z" fill="#000"/></svg>
<svg class="abs" style="left:933px;top:689px" width="8" height="5"><path d="M0,0H8L4,5Z" fill="#000"/></svg>
<svg class="abs" style="left:1316px;top:659px" width="44" height="32"><path d="M13,2C16,0 19,1 18,4C17,6 15,8 13,9" stroke="#e02020" stroke-width="2" fill="none"/><path d="M3,22C6,16 10,12 11,9C8,10 6,11 5,12C9,9 14,8 16,10C16,14 10,20 3,22Z" fill="#5030a0"/><path d="M25,8C20,7 17,9 18,12C19,14 23,15 23,18C23,21 19,22 16,21" stroke="#f0a020" stroke-width="2.2" fill="none"/><text x="9" y="30" font-size="9" font-weight="bold" font-style="italic" font-family="Liberation Sans" fill="#4a2c98" letter-spacing="0.3">CATIA</text></svg>
<div id="status" class="abs"></div>
<div class="t" style="left:3px;top:701.5px;font-size:12px;color:#000">Sélectionnez un objet ou une commande</div>
<div class="abs" style="left:999px;top:698px;width:298px;height:19px;background:#fff;border-top:1px solid #a0a0a8;border-left:1px solid #a0a0a8"></div>
<div class="abs" style="left:1299px;top:697px;width:32px;height:21px;background:#d4d4e6;border:1px solid #fff;border-right-color:#777;border-bottom-color:#777"></div>
<svg class="abs" style="left:1306px;top:700px" width="18" height="16"><rect x="3.5" y="3.5" width="7" height="6" fill="none" stroke="#a8a8b0" stroke-width="1.5"/><path d="M2,13.5H14.5V2" stroke="#a8a8b0" stroke-width="1.5" fill="none"/><path d="M1,14.5H15.5V1" stroke="#fff" stroke-width="0.8" fill="none"/></svg>
<div class="abs" style="left:1332px;top:697px;width:34px;height:21px;background:#d4d4e6;border:1px solid #fff;border-right-color:#777;border-bottom-color:#777"></div>
<svg class="abs" style="left:1340px;top:699px" width="18" height="16"><ellipse cx="9" cy="7" rx="7" ry="5.5" fill="#fff" stroke="#000" stroke-width="1.6"/><path d="M11,12L14,15" stroke="#000" stroke-width="1.5"/><text x="7" y="10.5" font-size="9" font-weight="bold" font-family="Liberation Serif" fill="#24f">i</text></svg>
<div id="task" class="abs"></div>
<svg class="abs" style="left:429px;top:732px" width="25" height="25"><defs><linearGradient id="wg" x1="0" y1="0" x2="1" y2="1"><stop offset="0" stop-color="#6ad0ff"/><stop offset="1" stop-color="#1e90e0"/></linearGradient></defs><rect x="1" y="1" width="11" height="11" fill="url(#wg)"/><rect x="13" y="1" width="11" height="11" fill="url(#wg)"/><rect x="1" y="13" width="11" height="11" fill="url(#wg)"/><rect x="13" y="13" width="11" height="11" fill="url(#wg)"/></svg>
<svg class="abs" style="left:473px;top:731px" width="26" height="26"><circle cx="14" cy="11" r="8" fill="#3a4450" stroke="#dde4ea" stroke-width="2.5"/><path d="M8,17L3,23" stroke="#dde4ea" stroke-width="3" stroke-linecap="round"/></svg>
<svg class="abs" style="left:517px;top:732px" width="27" height="24"><rect x="10" y="1" width="15" height="14" rx="1.5" fill="#f0f0f0"/><rect x="1" y="7" width="15" height="15" rx="1.5" fill="#7a7a7a"/><rect x="10" y="7" width="6" height="8" fill="#b8b8b8"/></svg>
<svg class="abs" style="left:561px;top:732px" width="26" height="24"><path d="M1,3H9L11,5H25V22H1Z" fill="#e8a820"/><rect x="1" y="7" width="24" height="15" fill="#ffd24a"/><rect x="6" y="15" width="13" height="8" rx="1" fill="#1a7fd8"/></svg>
<div class="abs" style="left:571px;top:760px;width:6px;height:3px;border-radius:2px;background:#9aa0a6"></div>
<svg class="abs" style="left:605px;top:731px" width="26" height="26"><defs><linearGradient id="eg" x1="0" y1="0" x2="0.3" y2="1"><stop offset="0" stop-color="#2fb6ea"/><stop offset="0.6" stop-color="#1a7fd6"/><stop offset="1" stop-color="#0b4f9a"/></linearGradient><linearGradient id="eg2" x1="0" y1="0" x2="1" y2="1"><stop offset="0" stop-color="#40d0a0"/><stop offset="1" stop-color="#86e060"/></linearGradient></defs><circle cx="13" cy="13" r="12" fill="url(#eg)"/><path d="M3,10C5,3 12,0 18,2C23,4 25,9 24,13C23,16 19,17 16,16C19,13 18,8 13,8C8,8 5,11 3,13Z" fill="url(#eg2)"/><path d="M7,16C7,11 11,9 14,10C11,12 11,17 14,20C10,20 7,19 7,16Z" fill="#0c4f9a"/></svg>
<svg class="abs" style="left:649px;top:731px" width="25" height="26"><path d="M7,7V4A5,4 0 0 1 18,4V7" stroke="#4ab0f0" stroke-width="2" fill="none"/><rect x="1" y="7" width="23" height="18" rx="3" fill="#f4f4f4"/><rect x="8" y="11" width="4" height="4" fill="#f25022"/><rect x="13" y="11" width="4" height="4" fill="#7fba00"/><rect x="8" y="16" width="4" height="4" fill="#00a4ef"/><rect x="13" y="16" width="4" height="4" fill="#ffb900"/></svg>
<svg class="abs" style="left:693px;top:733px" width="24" height="21"><rect x="0.5" y="0.5" width="23" height="20" fill="#0c0c0c" stroke="#bbb"/><rect x="1" y="1" width="22" height="2" fill="#ddd"/><text x="3" y="11" font-size="6" font-family="Liberation Mono" fill="#fff">C:\_</text></svg>
<svg class="abs" style="left:738px;top:730px" width="34" height="28"><circle cx="12" cy="16" r="11" fill="#db4437"/><path d="M12,16L22.5,12A11,11 0 0 1 7,26Z" fill="#ffcd40"/><path d="M12,16L7,26A11,11 0 0 1 2,10Z" fill="#0f9d58"/><circle cx="12" cy="16" r="5" fill="#fff"/><circle cx="12" cy="16" r="4" fill="#4285f4"/><circle cx="21" cy="8" r="7.5" fill="#4a8ae8"/><path d="M16,9h10M18,11a2,2 0 1 0 0.1,0M24,11a2,2 0 1 0 0.1,0" stroke="#fff" stroke-width="1" fill="none"/></svg>
<div class="abs" style="left:747px;top:760px;width:6px;height:3px;border-radius:2px;background:#9aa0a6"></div>
<div class="abs" style="left:774px;top:724px;width:40px;height:40px;border-radius:4px;background:#3b2326"></div>
<svg class="abs" style="left:782px;top:730px" width="34" height="28"><circle cx="12" cy="16" r="11" fill="#2aa3de"/><path d="M5,16L19,10L17,22L12,18L10,21V17L16,12L9,17Z" fill="#fff"/><circle cx="21" cy="8" r="8" fill="#e83030"/><text x="21" y="12" font-size="11" font-family="Liberation Sans" fill="#fff" text-anchor="middle">22</text></svg>
<div class="abs" style="left:790px;top:760px;width:9px;height:3px;border-radius:2px;background:#f090a0"></div>
<svg class="abs" style="left:825px;top:733px" width="26" height="22"><rect x="8" y="0" width="17" height="22" rx="1.5" fill="#41a5ee"/><rect x="8" y="11" width="17" height="11" fill="#185abd"/><rect x="8" y="6" width="17" height="6" fill="#2b7cd3"/><rect x="1" y="4" width="13" height="14" rx="1.5" fill="#185abd"/><text x="2.5" y="15" font-size="11" font-weight="bold" font-family="Liberation Sans" fill="#fff">W</text></svg>
<div class="abs" style="left:835px;top:760px;width:6px;height:3px;border-radius:2px;background:#9aa0a6"></div>
<div class="abs" style="left:866px;top:724px;width:36px;height:40px;border-radius:4px;background:#252c33"></div>
<div class="abs" style="left:862px;top:724px;width:36px;height:40px;border-radius:4px;background:#2c333b"></div>
<svg class="abs" style="left:869px;top:732px" width="24" height="24"><defs><radialGradient id="burst2" cx="0.62" cy="0.45" r="0.45"><stop offset="0" stop-color="#ffe070"/><stop offset="0.5" stop-color="#f09030"/><stop offset="1" stop-color="#f09030" stop-opacity="0"/></radialGradient></defs><rect x="0.5" y="0.5" width="23" height="23" fill="#000" stroke="#eee" stroke-width="1.5"/><rect x="2" y="2" width="20" height="20" fill="url(#burst2)"/><path d="M2,3 C9,6 14,13 16,22 L12,22 C10,15 6,9 2,7Z" fill="#2a9af0"/></svg>
<div class="abs" style="left:874px;top:760px;width:15px;height:3px;border-radius:2px;background:#4cc2ff"></div>
<svg class="abs" style="left:913px;top:732px" width="26" height="26"><circle cx="13" cy="13" r="12" fill="#1e88e5"/><circle cx="13" cy="13" r="9.5" fill="#e8f4ff"/><path d="M13,3.5L18,9H8ZM22.5,13L17,18V8ZM13,22.5L8,17H18ZM3.5,13L9,8V18Z" fill="#2a90e8"/><circle cx="13" cy="13" r="5" fill="#333"/></svg>
<div class="abs" style="left:923px;top:760px;width:6px;height:3px;border-radius:2px;background:#9aa0a6"></div>
<svg class="abs" style="left:1085px;top:737px" width="16" height="12"><path d="M2,9L8,3L14,9" stroke="#fff" stroke-width="1.5" fill="none"/></svg>
<svg class="abs" style="left:1106px;top:734px" width="22" height="20"><circle cx="12" cy="8" r="7" fill="#3a80d0"/><path d="M2,12C6,6 14,6 18,10L14,18Z" fill="#e84"/><path d="M6,10L16,18L10,20Z" fill="#4c4"/><path d="M2,14C6,9 12,10 16,14" stroke="#fe4" stroke-width="2" fill="none"/></svg>
<div class="t" style="left:1140px;top:739px;font-size:12.5px;color:#fff">FRA</div>
<svg class="abs" style="left:1179px;top:735px" width="20" height="16"><path d="M1,6A13,13 0 0 1 19,6M4,9A9,9 0 0 1 16,9M7,12A5,5 0 0 1 13,12" stroke="#fff" stroke-width="1.5" fill="none"/><circle cx="10" cy="14" r="1.5" fill="#fff"/></svg>
<svg class="abs" style="left:1203px;top:735px" width="22" height="18"><path d="M2,6H6L11,2V16L6,12H2Z" fill="none" stroke="#fff" stroke-width="1.3"/><path d="M14,6A4,4 0 0 1 14,12M17,4A7,7 0 0 1 17,14" stroke="#fff" stroke-width="1.3" fill="none"/></svg>
<svg class="abs" style="left:1227px;top:735px" width="22" height="16"><path d="M2,3V7M5,3V7M1,7H6V10H1Z" fill="#fff" stroke="#fff"/><rect x="7.5" y="4.5" width="11" height="9" fill="none" stroke="#fff" stroke-width="1.5"/><rect x="10" y="7" width="6" height="4" fill="#fff"/><rect x="19" y="7" width="2" height="4" fill="#fff"/></svg>
<div class="t" style="left:1282px;top:730px;width:40px;text-align:right;font-size:12.5px;color:#fff">14:19</div>
<div class="t" style="left:1252px;top:746px;width:70px;text-align:right;font-size:12.5px;color:#fff">05/03/2022</div>
<svg class="abs" style="left:1328px;top:733px" width="20" height="20"><circle cx="10" cy="10" r="9" fill="#4cc2ff"/><text x="10" y="14.5" font-size="12" font-family="Liberation Sans" fill="#000" text-anchor="middle">5</text></svg>
</body></html>
